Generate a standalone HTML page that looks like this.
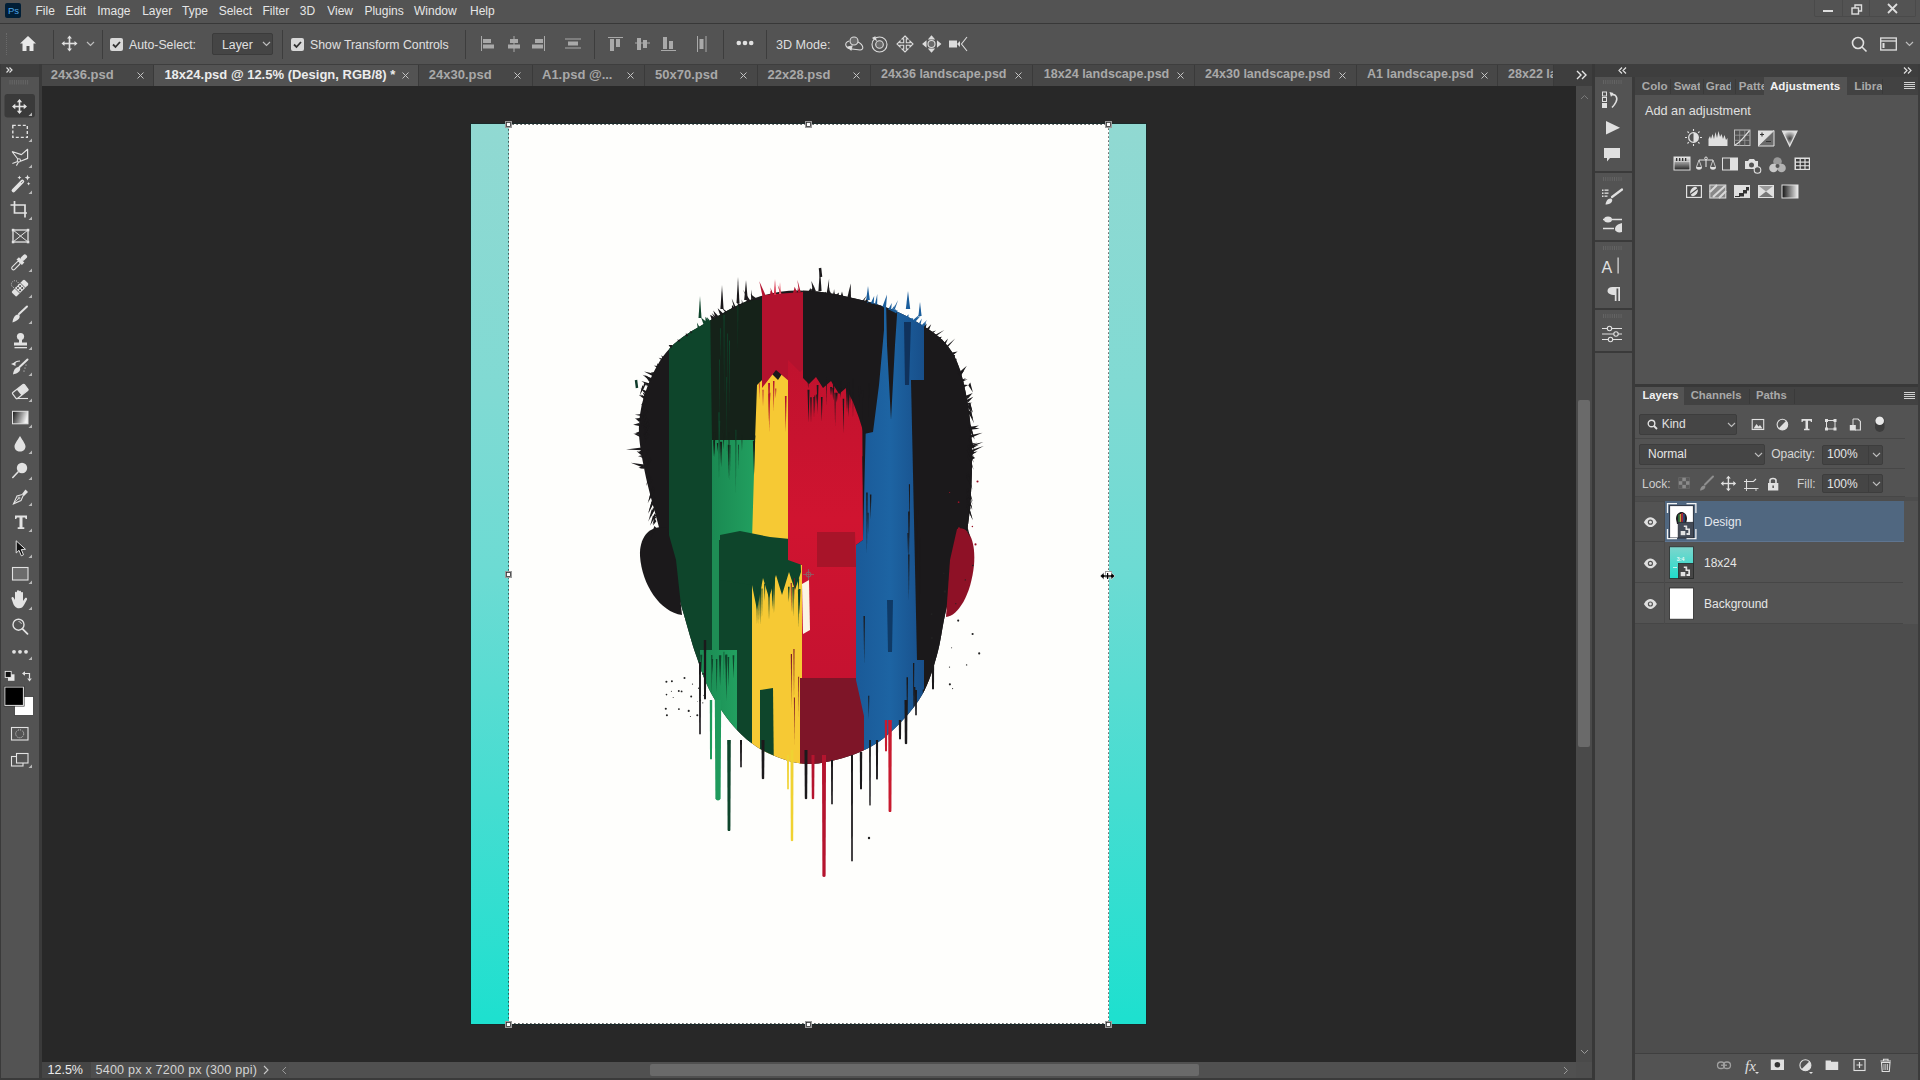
<!DOCTYPE html>
<html><head><meta charset="utf-8">
<style>
*{margin:0;padding:0;box-sizing:border-box}
html,body{width:1920px;height:1080px;overflow:hidden;background:#535353;font-family:"Liberation Sans",sans-serif;color:#dcdcdc}
.a{position:absolute}
.t{position:absolute;white-space:nowrap;line-height:1}
svg{position:absolute;overflow:visible}
</style></head><body>

<!-- MENU BAR -->
<div class="a" style="left:0;top:0;width:1920px;height:23px;background:#535353"></div>
<div class="a" style="left:0;top:22.5px;width:1920px;height:1.5px;background:#383838"></div>
<div class="a" style="left:5px;top:3px;width:16px;height:15px;background:#001e36;border-radius:2px"></div>
<div class="t" style="left:8px;top:5.5px;font-size:9.5px;color:#4aa6e8">Ps</div>
<div class="t" style="left:35.5px;top:5px;font-size:12px;color:#e6e6e6">File</div><div class="t" style="left:65.4px;top:5px;font-size:12px;color:#e6e6e6">Edit</div><div class="t" style="left:97.2px;top:5px;font-size:12px;color:#e6e6e6">Image</div><div class="t" style="left:142.2px;top:5px;font-size:12px;color:#e6e6e6">Layer</div><div class="t" style="left:182px;top:5px;font-size:12px;color:#e6e6e6">Type</div><div class="t" style="left:218.7px;top:5px;font-size:12px;color:#e6e6e6">Select</div><div class="t" style="left:262.5px;top:5px;font-size:12px;color:#e6e6e6">Filter</div><div class="t" style="left:299.8px;top:5px;font-size:12px;color:#e6e6e6">3D</div><div class="t" style="left:327.2px;top:5px;font-size:12px;color:#e6e6e6">View</div><div class="t" style="left:364.4px;top:5px;font-size:12px;color:#e6e6e6">Plugins</div><div class="t" style="left:414px;top:5px;font-size:12px;color:#e6e6e6">Window</div><div class="t" style="left:470px;top:5px;font-size:12px;color:#e6e6e6">Help</div>

<!-- OPTIONS BAR -->
<div class="a" style="left:0;top:24px;width:1920px;height:40px;background:#535353"></div>


<!-- options content -->
<div class="a" style="left:6px;top:33px;width:1px;height:22px;border-left:1px dotted #6a6a6a"></div>
<svg style="left:19px;top:35px" width="18" height="17" viewBox="0 0 18 17"><path d="M9 1 L17 8.5 L14.5 8.5 L14.5 16 L10.5 16 L10.5 11 L7.5 11 L7.5 16 L3.5 16 L3.5 8.5 L1 8.5 Z" fill="#e8e8e8"/></svg>
<div class="a" style="left:53px;top:30px;width:1px;height:29px;background:#3d3d3d"></div>
<svg style="left:61px;top:35px" width="17" height="17" viewBox="0 0 17 17"><g stroke="#e0e0e0" stroke-width="1.6" fill="#e0e0e0"><line x1="8.5" y1="2" x2="8.5" y2="15"/><line x1="2" y1="8.5" x2="15" y2="8.5"/></g><g fill="#e0e0e0"><path d="M8.5 0.5 L11 3.5 L6 3.5Z"/><path d="M8.5 16.5 L11 13.5 L6 13.5Z"/><path d="M0.5 8.5 L3.5 6 L3.5 11Z"/><path d="M16.5 8.5 L13.5 6 L13.5 11Z"/></g></svg>
<svg style="left:86px;top:41px" width="9" height="6" viewBox="0 0 9 6"><path d="M1 1 L4.5 4.5 L8 1" stroke="#bdbdbd" stroke-width="1.2" fill="none"/></svg>
<div class="a" style="left:102px;top:30px;width:1px;height:29px;background:#3d3d3d"></div>
<div class="a" style="left:110px;top:38px;width:13px;height:13px;background:#d8d8d8;border-radius:2px"></div>
<svg style="left:110px;top:38px" width="13" height="13" viewBox="0 0 13 13"><path d="M3 6.5 L5.5 9 L10 4" stroke="#333" stroke-width="1.8" fill="none"/></svg>
<div class="t" style="left:129px;top:39px;font-size:12.3px;color:#e0e0e0">Auto-Select:</div>
<div class="a" style="left:212px;top:33px;width:61px;height:22px;background:#454545;border:1px solid #3b3b3b;border-radius:2px"></div>
<div class="t" style="left:222px;top:39px;font-size:12.3px;color:#e0e0e0">Layer</div>
<svg style="left:262px;top:41px" width="9" height="6" viewBox="0 0 9 6"><path d="M1 1 L4.5 4.5 L8 1" stroke="#bdbdbd" stroke-width="1.2" fill="none"/></svg>
<div class="a" style="left:282px;top:30px;width:1px;height:29px;background:#3d3d3d"></div>
<div class="a" style="left:291px;top:38px;width:13px;height:13px;background:#d8d8d8;border-radius:2px"></div>
<svg style="left:291px;top:38px" width="13" height="13" viewBox="0 0 13 13"><path d="M3 6.5 L5.5 9 L10 4" stroke="#333" stroke-width="1.8" fill="none"/></svg>
<div class="t" style="left:310px;top:39px;font-size:12.3px;color:#e0e0e0">Show Transform Controls</div>
<div class="a" style="left:465px;top:30px;width:1px;height:29px;background:#3d3d3d"></div>
<svg style="left:480px;top:36px" width="110" height="16" viewBox="0 0 110 16" fill="#a9a9a9">
 <rect x="1" y="0" width="1" height="15"/><rect x="3" y="3" width="8" height="4"/><rect x="3" y="8.5" width="11" height="4"/>
 <rect x="33.5" y="0" width="1" height="16"/><rect x="30" y="3" width="8" height="4"/><rect x="28" y="8.5" width="12" height="4"/>
 <rect x="64" y="0" width="1" height="15"/><rect x="55" y="3" width="8" height="4"/><rect x="52" y="8.5" width="11" height="4"/>
 <rect x="85" y="2.5" width="16" height="1"/><rect x="88" y="5.5" width="10" height="4"/><rect x="85" y="11.5" width="16" height="1"/>
</svg>
<div class="a" style="left:594px;top:30px;width:1px;height:29px;background:#3d3d3d"></div>
<svg style="left:608px;top:36px" width="105" height="16" viewBox="0 0 105 16" fill="#a9a9a9">
 <rect x="0" y="1" width="15" height="1"/><rect x="2" y="3" width="4" height="12"/><rect x="8" y="3" width="4" height="8"/>
 <rect x="27" y="6.5" width="15" height="1"/><rect x="29" y="2" width="4" height="12"/><rect x="35" y="4" width="4" height="8"/>
 <rect x="53" y="14" width="15" height="1"/><rect x="55" y="1" width="4" height="12"/><rect x="61" y="5" width="4" height="8"/>
 <rect x="89" y="0" width="1" height="16"/><rect x="91.5" y="3" width="4" height="10"/><rect x="97.5" y="0" width="1" height="16"/>
</svg>
<div class="a" style="left:723px;top:30px;width:1px;height:29px;background:#3d3d3d"></div>
<svg style="left:736px;top:40px" width="18" height="6" viewBox="0 0 18 6" fill="#e0e0e0"><circle cx="2.8" cy="3" r="2.3"/><circle cx="9" cy="3" r="2.3"/><circle cx="15.2" cy="3" r="2.3"/></svg>
<div class="a" style="left:766px;top:30px;width:1px;height:29px;background:#3d3d3d"></div>
<div class="t" style="left:776px;top:39px;font-size:12.6px;color:#dedede">3D Mode:</div>
<svg style="left:844px;top:35px" width="125" height="18" viewBox="0 0 125 18" fill="none" stroke="#dcdcdc" stroke-width="1.1">
 <circle cx="10" cy="6" r="4" fill="#6a6a6a"/><path d="M5 6 C-1 8, 2 14, 8 14 L16 15 C20 15, 20 10, 14 7"/><path d="M4 12 L8 11 L7 15 Z" fill="#dcdcdc"/>
 <circle cx="35.5" cy="9.5" r="7.5"/><circle cx="35.5" cy="9.5" r="3.8" fill="#6a6a6a"/><path d="M29 3 L31 2 L32 5 Z" fill="#dcdcdc"/>
 <path d="M61 1 L64 4 L62.3 4 L62.3 7.7 L66 7.7 L66 6 L69 9 L66 12 L66 10.3 L62.3 10.3 L62.3 14 L64 14 L61 17 L58 14 L59.7 14 L59.7 10.3 L56 10.3 L56 12 L53 9 L56 6 L56 7.7 L59.7 7.7 L59.7 4 L58 4 Z"/>
 <circle cx="87.5" cy="9" r="3.5" fill="#6a6a6a"/><path d="M87.5 1 L90 4 L85 4 Z M87.5 17 L90 14 L85 14 Z M79 9 L82 6.5 L82 11.5 Z M96.5 9 L93.5 6.5 L93.5 11.5 Z" fill="#dcdcdc"/>
 <rect x="105" y="5.5" width="8" height="7" fill="#dcdcdc" stroke="none"/><path d="M113 9 L116 6 L116 12 Z" fill="#dcdcdc" stroke="none"/><path d="M123 2 L117.5 9 L123 16"/>
</svg>
<svg style="left:1851px;top:36px" width="17" height="17" viewBox="0 0 17 17" fill="none" stroke="#e0e0e0" stroke-width="1.6"><circle cx="7" cy="7" r="5.5"/><line x1="11" y1="11" x2="15.5" y2="15.5"/></svg>
<svg style="left:1880px;top:37px" width="17" height="14" viewBox="0 0 17 14" fill="none" stroke="#e0e0e0" stroke-width="1.3"><rect x="0.7" y="1" width="15.6" height="12"/><line x1="0.7" y1="4" x2="16.3" y2="4"/><rect x="2.5" y="6" width="2" height="5" fill="#e0e0e0" stroke="none"/></svg>
<svg style="left:1905px;top:41px" width="9" height="6" viewBox="0 0 9 6"><path d="M1 1 L4.5 4.5 L8 1" stroke="#bdbdbd" stroke-width="1.2" fill="none"/></svg>
<!-- window controls -->
<div class="a" style="left:1814px;top:-1px;width:102px;height:18px;border:1px solid #4a4a4a;border-top:none;border-radius:0 0 2px 2px"></div>
<div class="a" style="left:1842px;top:0;width:1px;height:16px;background:#4a4a4a"></div>
<div class="a" style="left:1869px;top:0;width:1px;height:16px;background:#4a4a4a"></div>
<div class="a" style="left:1823px;top:10px;width:10px;height:2px;background:#dedede"></div>
<svg style="left:1851px;top:4px" width="12" height="11" viewBox="0 0 12 11" fill="none" stroke="#dedede" stroke-width="1.4"><rect x="1" y="4" width="6.5" height="6"/><path d="M4 4 V1 H10.5 V7 H7.5"/></svg>
<svg style="left:1887px;top:3px" width="11" height="11" viewBox="0 0 11 11" stroke="#dedede" stroke-width="1.8"><line x1="1" y1="1" x2="10" y2="10"/><line x1="10" y1="1" x2="1" y2="10"/></svg>

<!-- TAB BAR -->
<div class="a" style="left:0;top:64px;width:1592px;height:22px;background:#3e3e3e"></div>

<div class="a" style="left:42px;top:65px;width:112px;height:21px;background:#474747;border-right:1px solid #3a3a3a"></div><div class="t" style="left:50.8px;top:67.8px;font-size:13px;font-weight:bold;color:#a9a9a9">24x36.psd</div><svg style="left:136.5px;top:71.5px" width="7" height="7" viewBox="0 0 7 7" stroke="#c4c4c4" stroke-width="1"><line x1="0.5" y1="0.5" x2="6.5" y2="6.5"/><line x1="6.5" y1="0.5" x2="0.5" y2="6.5"/></svg><div class="a" style="left:154px;top:65px;width:265px;height:21px;background:#535353;border-right:1px solid #3a3a3a"></div><div class="t" style="left:164.4px;top:67.8px;font-size:13px;font-weight:bold;color:#ececec">18x24.psd @ 12.5% (Design, RGB/8) *</div><svg style="left:401.5px;top:71.5px" width="7" height="7" viewBox="0 0 7 7" stroke="#c4c4c4" stroke-width="1"><line x1="0.5" y1="0.5" x2="6.5" y2="6.5"/><line x1="6.5" y1="0.5" x2="0.5" y2="6.5"/></svg><div class="a" style="left:419px;top:65px;width:113.5px;height:21px;background:#474747;border-right:1px solid #3a3a3a"></div><div class="t" style="left:428.75px;top:67.8px;font-size:13px;font-weight:bold;color:#a9a9a9">24x30.psd</div><svg style="left:514.0px;top:71.5px" width="7" height="7" viewBox="0 0 7 7" stroke="#c4c4c4" stroke-width="1"><line x1="0.5" y1="0.5" x2="6.5" y2="6.5"/><line x1="6.5" y1="0.5" x2="0.5" y2="6.5"/></svg><div class="a" style="left:532.5px;top:65px;width:112.5px;height:21px;background:#474747;border-right:1px solid #3a3a3a"></div><div class="t" style="left:542px;top:67.8px;font-size:13px;font-weight:bold;color:#a9a9a9">A1.psd @...</div><svg style="left:627.25px;top:71.5px" width="7" height="7" viewBox="0 0 7 7" stroke="#c4c4c4" stroke-width="1"><line x1="0.5" y1="0.5" x2="6.5" y2="6.5"/><line x1="6.5" y1="0.5" x2="0.5" y2="6.5"/></svg><div class="a" style="left:645px;top:65px;width:112.5px;height:21px;background:#474747;border-right:1px solid #3a3a3a"></div><div class="t" style="left:655px;top:67.8px;font-size:13px;font-weight:bold;color:#a9a9a9">50x70.psd</div><svg style="left:740.25px;top:71.5px" width="7" height="7" viewBox="0 0 7 7" stroke="#c4c4c4" stroke-width="1"><line x1="0.5" y1="0.5" x2="6.5" y2="6.5"/><line x1="6.5" y1="0.5" x2="0.5" y2="6.5"/></svg><div class="a" style="left:757.5px;top:65px;width:113.5px;height:21px;background:#474747;border-right:1px solid #3a3a3a"></div><div class="t" style="left:767.5px;top:67.8px;font-size:13px;font-weight:bold;color:#a9a9a9">22x28.psd</div><svg style="left:853.25px;top:71.5px" width="7" height="7" viewBox="0 0 7 7" stroke="#c4c4c4" stroke-width="1"><line x1="0.5" y1="0.5" x2="6.5" y2="6.5"/><line x1="6.5" y1="0.5" x2="0.5" y2="6.5"/></svg><div class="a" style="left:871px;top:65px;width:161.5px;height:21px;background:#474747;border-right:1px solid #3a3a3a"></div><div class="t" style="left:881px;top:67.8px;font-size:12.55px;font-weight:bold;color:#a9a9a9">24x36 landscape.psd</div><svg style="left:1015.25px;top:71.5px" width="7" height="7" viewBox="0 0 7 7" stroke="#c4c4c4" stroke-width="1"><line x1="0.5" y1="0.5" x2="6.5" y2="6.5"/><line x1="6.5" y1="0.5" x2="0.5" y2="6.5"/></svg><div class="a" style="left:1032.5px;top:65px;width:162.5px;height:21px;background:#474747;border-right:1px solid #3a3a3a"></div><div class="t" style="left:1043.75px;top:67.8px;font-size:12.55px;font-weight:bold;color:#a9a9a9">18x24 landscape.psd</div><svg style="left:1177.25px;top:71.5px" width="7" height="7" viewBox="0 0 7 7" stroke="#c4c4c4" stroke-width="1"><line x1="0.5" y1="0.5" x2="6.5" y2="6.5"/><line x1="6.5" y1="0.5" x2="0.5" y2="6.5"/></svg><div class="a" style="left:1195px;top:65px;width:162px;height:21px;background:#474747;border-right:1px solid #3a3a3a"></div><div class="t" style="left:1205px;top:67.8px;font-size:12.55px;font-weight:bold;color:#a9a9a9">24x30 landscape.psd</div><svg style="left:1339.3px;top:71.5px" width="7" height="7" viewBox="0 0 7 7" stroke="#c4c4c4" stroke-width="1"><line x1="0.5" y1="0.5" x2="6.5" y2="6.5"/><line x1="6.5" y1="0.5" x2="0.5" y2="6.5"/></svg><div class="a" style="left:1357px;top:65px;width:141.29999999999995px;height:21px;background:#474747;border-right:1px solid #3a3a3a"></div><div class="t" style="left:1367px;top:67.8px;font-size:12.55px;font-weight:bold;color:#a9a9a9">A1 landscape.psd</div><svg style="left:1480.5px;top:71.5px" width="7" height="7" viewBox="0 0 7 7" stroke="#c4c4c4" stroke-width="1"><line x1="0.5" y1="0.5" x2="6.5" y2="6.5"/><line x1="6.5" y1="0.5" x2="0.5" y2="6.5"/></svg><div class="a" style="left:1498.3px;top:65px;width:56px;height:21px;background:#474747;overflow:hidden;border-right:1px solid #3a3a3a"><div class="t" style="left:9.7px;top:2.8px;font-size:12.55px;font-weight:bold;color:#a9a9a9">28x22 landscape.psd</div></div><svg style="left:1576px;top:70px" width="11" height="10" viewBox="0 0 11 10" fill="none" stroke="#e6e6e6" stroke-width="1.4"><path d="M1 1 L5 5 L1 9 M6 1 L10 5 L6 9"/></svg>
<!-- LEFT TOOLBAR -->
<div class="a" style="left:0;top:64px;width:40px;height:1016px;background:#535353"></div>
<div class="a" style="left:0;top:64px;width:40px;height:13px;background:#3e3e3e"></div>
<div class="a" style="left:39px;top:64px;width:3px;height:1016px;background:#3a3a3a"></div>


<!-- TOOLBAR CONTENT -->
<div class="a" style="left:0;top:64px;width:1px;height:1016px;background:#3a3a3a"></div>
<svg style="left:6px;top:67px" width="7" height="6" viewBox="0 0 7 6" fill="none" stroke="#e0e0e0" stroke-width="1.2"><path d="M0.5 0.5 L3 3 L0.5 5.5 M3.5 0.5 L6 3 L3.5 5.5"/></svg>
<svg style="left:0;top:0" width="42" height="1080" viewBox="0 0 42 1080">
 <g stroke="#6e6e6e" stroke-width="0.7"><line x1="10.0" y1="80" x2="10.0" y2="84.5"/><line x1="12.2" y1="80" x2="12.2" y2="84.5"/><line x1="14.4" y1="80" x2="14.4" y2="84.5"/><line x1="16.6" y1="80" x2="16.6" y2="84.5"/><line x1="18.8" y1="80" x2="18.8" y2="84.5"/><line x1="21.0" y1="80" x2="21.0" y2="84.5"/><line x1="23.2" y1="80" x2="23.2" y2="84.5"/><line x1="25.4" y1="80" x2="25.4" y2="84.5"/><line x1="27.6" y1="80" x2="27.6" y2="84.5"/></g>
 <rect x="4.5" y="94" width="30.5" height="23.5" rx="3" fill="#3a3a3a"/>
 <!-- move -->
 <g fill="#e2e2e2" stroke="#e2e2e2"><line x1="19.5" y1="100.5" x2="19.5" y2="112.5" stroke-width="1.6"/><line x1="13.5" y1="106.5" x2="25.5" y2="106.5" stroke-width="1.6"/>
 <path d="M19.5 99 L22.2 102.3 L16.8 102.3Z M19.5 114 L22.2 110.7 L16.8 110.7Z M12 106.5 L15.3 103.8 L15.3 109.2Z M27 106.5 L23.7 103.8 L23.7 109.2Z" stroke="none"/></g>
 <path d="M32 116 L28.5 116 L32 112.5 Z" fill="#b8b8b8"/>
 <!-- marquee -->
 <rect x="12.8" y="125.4" width="14.5" height="12" fill="none" stroke="#e2e2e2" stroke-width="1.4" stroke-dasharray="3 2"/>
 <path d="M32 142 L28.5 142 L32 138.5 Z" fill="#b8b8b8"/>
 <!-- lasso -->
 <path d="M12 151.5 L21.4 154.6 L27.6 149.3 L27.6 158.4 L20.5 161.3 M12 151.5 L17.8 159" fill="none" stroke="#e2e2e2" stroke-width="1.2" stroke-linejoin="round"/><circle cx="18.9" cy="160.4" r="1.6" fill="none" stroke="#e2e2e2" stroke-width="1.1"/><path d="M17.6 161.5 L12.4 163.6 M18.5 162 L16.4 165.6" stroke="#e2e2e2" stroke-width="1.1"/>
 <path d="M32 168 L28.5 168 L32 164.5 Z" fill="#b8b8b8"/>
 <!-- magic wand -->
 <path d="M13.5 190.5 L22.3 181.5" stroke="#e2e2e2" stroke-width="3.8" stroke-linecap="round"/><path d="M21.2 182.8 L22.6 181.3" stroke="#6a6a6a" stroke-width="1"/>
 <path d="M19.4 175.6 L20 177 L21.4 177.6 L20 178.2 L19.4 179.6 L18.8 178.2 L17.4 177.6 L18.8 177Z M27.5 174.8 L28.3 176.8 L30.3 177.6 L28.3 178.4 L27.5 180.4 L26.7 178.4 L24.7 177.6 L26.7 176.8Z M28.6 182 L29.2 183.2 L30.4 183.7 L29.2 184.2 L28.6 185.4 L28 184.2 L26.8 183.7 L28 183.2Z" fill="#e2e2e2"/>
 <path d="M32 194 L28.5 194 L32 190.5 Z" fill="#b8b8b8"/>
 <!-- crop -->
 <path d="M14.5 201 V213 H27 M10.5 205 H25 V217.5" fill="none" stroke="#e2e2e2" stroke-width="1.7"/>
 <path d="M32 220 L28.5 220 L32 216.5 Z" fill="#b8b8b8"/>
 <!-- frame -->
 <rect x="13" y="230" width="15" height="12" fill="none" stroke="#e2e2e2" stroke-width="1.3"/><path d="M13 230 L28 242 M28 230 L13 242" stroke="#e2e2e2" stroke-width="1"/>
 <g fill="#e2e2e2"><rect x="11.8" y="228.8" width="2.5" height="2.5"/><rect x="26.8" y="228.8" width="2.5" height="2.5"/><rect x="11.8" y="240.8" width="2.5" height="2.5"/><rect x="26.8" y="240.8" width="2.5" height="2.5"/></g>
 <!-- eyedropper -->
 <g transform="rotate(45 20 261.5)">
  <rect x="18.3" y="262" width="3.4" height="10.5" rx="1.7" fill="none" stroke="#e2e2e2" stroke-width="1.1"/>
  <rect x="16.2" y="259.2" width="7.6" height="3.4" fill="#e2e2e2"/>
  <rect x="17.8" y="252.5" width="4.4" height="7.2" rx="2" fill="#e2e2e2"/>
 </g>
 <path d="M32 272 L28.5 272 L32 268.5 Z" fill="#b8b8b8"/>
 <!-- healing -->
 <g transform="rotate(-45 20 288)"><rect x="11" y="284.6" width="18" height="7" rx="1.5" fill="#e2e2e2"/><path d="M16.2 284.6 V291.6 M23.8 284.6 V291.6" stroke="#535353" stroke-width="0.8"/><g fill="#4a4a4a"><circle cx="18.5" cy="286.6" r="1"/><circle cx="21.5" cy="286.6" r="1"/><circle cx="18.5" cy="289.6" r="1"/><circle cx="21.5" cy="289.6" r="1"/></g></g>
 <circle cx="15" cy="284.3" r="3.6" fill="none" stroke="#e2e2e2" stroke-width="0.9" stroke-dasharray="0.9 1.3"/>
 <path d="M32 298 L28.5 298 L32 294.5 Z" fill="#b8b8b8"/>
 <!-- brush -->
 <path d="M19 314 L27 306.5" stroke="#e2e2e2" stroke-width="2" stroke-linecap="round"/><path d="M12.5 322.5 C13 318, 15 314, 18.5 314.5 C20.5 315.5, 20 318.5, 17.5 320 C16 321, 14 322, 12.5 322.5Z" fill="#e2e2e2"/>
 <path d="M32 324 L28.5 324 L32 320.5 Z" fill="#b8b8b8"/>
 <!-- stamp -->
 <circle cx="20.5" cy="336.5" r="3.6" fill="#e2e2e2"/><path d="M19 339 L19 342.5 L14 342.5 L14 345.5 L27 345.5 L27 342.5 L22 342.5 L22 339Z" fill="#e2e2e2"/><rect x="14.5" y="347" width="12.5" height="1.3" fill="#e2e2e2"/>
 <path d="M32 350 L28.5 350 L32 346.5 Z" fill="#b8b8b8"/>
 <!-- history brush -->
 <path d="M19.5 367 L27.5 359.5" stroke="#e2e2e2" stroke-width="2" stroke-linecap="round"/><path d="M13 374.5 C13.5 370.5, 15.5 366.5, 19 367 C21 368, 20.5 371, 18 372.5 C16.5 373.5, 14.5 374, 13 374.5Z" fill="#e2e2e2"/>
 <path d="M20 361 C17 361, 15 362, 14 364" fill="none" stroke="#e2e2e2" stroke-width="1.1"/><path d="M11 364 L15.5 362 L15.5 366Z" fill="#e2e2e2"/>
 <g fill="#e2e2e2"><circle cx="26" cy="365" r="0.6"/><circle cx="25" cy="368" r="0.6"/><circle cx="24" cy="371" r="0.6"/></g>
 <path d="M32 376 L28.5 376 L32 372.5 Z" fill="#b8b8b8"/>
 <!-- eraser -->
 <g transform="rotate(-38 20 392)"><rect x="13" y="388" width="15" height="7.5" rx="1" fill="none" stroke="#e2e2e2" stroke-width="1.2"/><rect x="19" y="388" width="9" height="7.5" fill="#e2e2e2"/></g><path d="M16 398.5 H28" stroke="#e2e2e2" stroke-width="1.1"/>
 <path d="M32 402 L28.5 402 L32 398.5 Z" fill="#b8b8b8"/>
 <!-- gradient -->
 <defs><linearGradient id="gt" x1="0" x2="1" y1="0" y2="0.3"><stop offset="0" stop-color="#111"/><stop offset="1" stop-color="#f0f0f0"/></linearGradient>
 <linearGradient id="hg" x1="0" x2="1"><stop offset="0" stop-color="#222"/><stop offset="1" stop-color="#eee"/></linearGradient></defs>
 <rect x="12.5" y="411.3" width="15.5" height="12.5" fill="url(#gt)" stroke="#e2e2e2" stroke-width="1"/>
 <path d="M32 428 L28.5 428 L32 424.5 Z" fill="#b8b8b8"/>
 <!-- blur drop -->
 <path d="M20 436 C17 441, 14.5 444, 14.5 446.5 C14.5 449.5, 17 451.5, 20 451.5 C23 451.5, 25.5 449.5, 25.5 446.5 C25.5 444, 23 441, 20 436Z" fill="#e2e2e2"/>
 <path d="M32 454 L28.5 454 L32 450.5 Z" fill="#b8b8b8"/>
 <!-- dodge -->
 <circle cx="22" cy="468" r="5.2" fill="#e2e2e2"/><path d="M18 472 L12.8 477.5" stroke="#e2e2e2" stroke-width="1.6" stroke-linecap="round"/>
 <path d="M32 480 L28.5 480 L32 476.5 Z" fill="#b8b8b8"/>
 <!-- pen -->
 <path d="M25.5 489.5 L28 492 L24 496 L22 494Z" fill="#e2e2e2"/><path d="M22.5 494.5 L17 496 L13.5 503.8 L21 500.5 L23.5 495" fill="none" stroke="#e2e2e2" stroke-width="1.1"/><path d="M13.5 503.8 L18.5 498.5" stroke="#e2e2e2" stroke-width="0.9"/><circle cx="19" cy="498" r="1" fill="none" stroke="#e2e2e2" stroke-width="0.8"/>
 <path d="M32 506 L28.5 506 L32 502.5 Z" fill="#b8b8b8"/>
 <!-- type -->
 <path d="M15 515.5 H27 V519 H25.8 L25 517.5 H22.5 V527.3 H24.3 V529 H17.7 V527.3 H19.5 V517.5 H17 L16.2 519 H15Z" fill="#e2e2e2"/>
 <path d="M32 532 L28.5 532 L32 528.5 Z" fill="#b8b8b8"/>
 <!-- path select -->
 <path d="M16.2 540.8 L16.2 553 L19 550.3 L21.3 555.8 L23.5 554.8 L21.3 549.5 L25.5 549.3Z" fill="#111" stroke="#e2e2e2" stroke-width="1"/>
 <path d="M32 558 L28.5 558 L32 554.5 Z" fill="#b8b8b8"/>
 <!-- rectangle -->
 <rect x="12.5" y="567.5" width="15.5" height="12.5" fill="#6c6c6c" stroke="#e2e2e2" stroke-width="1.1"/>
 <path d="M32 584 L28.5 584 L32 580.5 Z" fill="#b8b8b8"/>
 <!-- hand -->
 <path d="M15 597 L15 592.5 C15 591.5, 17 591.5, 17 592.5 L17 598 L17 591 C17 590, 19 590, 19 591 L19 597.5 L19 591.5 C19 590.5, 21 590.5, 21 591.5 L21 598 L21 592.8 C21 591.8, 23 591.8, 23 592.8 L23 601 L25 598.3 C25.8 597.3, 27.5 598, 27 599.5 L24 605 C23 607, 21.5 608.3, 19 608.3 C15.5 608.3, 14 605.5, 13 603 L11.5 598.5 C11.2 597, 13 596.5, 13.7 597.8 L15 600Z" fill="#e2e2e2"/>
 <path d="M32 610 L28.5 610 L32 606.5 Z" fill="#b8b8b8"/>
 <!-- zoom -->
 <circle cx="18.5" cy="624.7" r="5.5" fill="none" stroke="#e2e2e2" stroke-width="1.4"/><path d="M22.5 628.8 L27.5 633.8" stroke="#e2e2e2" stroke-width="1.8" stroke-linecap="round"/><path d="M18.5 621.5 A3.2 3.2 0 0 1 21.5 624" fill="none" stroke="#e2e2e2" stroke-width="0.8"/>
 <!-- more -->
 <g fill="#e2e2e2"><circle cx="14" cy="651.8" r="1.9"/><circle cx="20" cy="651.8" r="1.9"/><circle cx="26" cy="651.8" r="1.9"/></g>
 <path d="M32 660 L28.5 660 L32 656.5 Z" fill="#b8b8b8"/>
 <!-- default colors -->
 <rect x="8" y="674.3" width="6.5" height="6.5" fill="#e8e8e8"/><rect x="5.2" y="671.4" width="6" height="6" fill="#111" stroke="#e8e8e8" stroke-width="0.9"/>
 <!-- swap -->
 <path d="M24 673.5 H29.5 V678.5" fill="none" stroke="#e2e2e2" stroke-width="1.2"/><path d="M22 673.5 L25 671.2 L25 675.8Z M29.5 681.5 L27.2 678.5 L31.8 678.5Z" fill="#e2e2e2"/>
 <!-- bg color -->
 <rect x="14.5" y="696.5" width="19" height="19" fill="#ffffff" stroke="#3a3a3a" stroke-width="0.8"/>
 <rect x="4.8" y="687" width="18.6" height="18.4" fill="#000" stroke="#f0f0f0" stroke-width="1"/>
 <rect x="4" y="686.2" width="20.2" height="20" fill="none" stroke="#333" stroke-width="0.6"/>
 <!-- quick mask -->
 <rect x="11.5" y="727.5" width="16.5" height="12.5" fill="none" stroke="#e2e2e2" stroke-width="1.1"/><circle cx="19.7" cy="733.8" r="4" fill="none" stroke="#e2e2e2" stroke-width="1" stroke-dasharray="0.9 1.2"/>
 <!-- screen mode -->
 <rect x="11.5" y="756.5" width="11.5" height="9.5" fill="#535353" stroke="#e2e2e2" stroke-width="1.1"/><rect x="16.5" y="753.5" width="11.5" height="9.5" fill="#535353" stroke="#e2e2e2" stroke-width="1.1"/>
 <path d="M32 768 L28.5 768 L32 764.5 Z" fill="#b8b8b8"/>
</svg>

<!-- CANVAS AREA -->
<div class="a" style="left:42px;top:86px;width:1534px;height:976px;background:#282828"></div>


<!-- DOCUMENT -->
<div class="a" style="left:470px;top:123px;width:677px;height:902px;background:#0f2a2a;opacity:.6"></div>
<div class="a" style="left:471px;top:124px;width:675px;height:900px;background:linear-gradient(180deg,#91d9d2 0%,#80dad3 30%,#6cdbd3 50%,#45ddd1 75%,#1de0cf 100%)"></div>
<div class="a" style="left:509px;top:124px;width:600px;height:900px;background:#fefefc"></div>
<svg id="head" style="left:0;top:0" width="1920" height="1080" viewBox="0 0 1920 1080">
<defs><clipPath id="hc"><path d="M812.0 291.0 C831.7 292.5 860.7 299.3 879.0 305.0 C897.3 310.7 909.8 317.2 922.0 325.0 C934.2 332.8 944.5 339.7 952.0 352.0 C959.5 364.3 963.7 381.3 967.0 399.0 C970.3 416.7 971.8 437.0 972.0 458.0 C972.2 479.0 970.7 506.7 968.0 525.0 C965.3 543.3 959.8 553.0 956.0 568.0 C952.2 583.0 948.2 600.5 945.0 615.0 C941.8 629.5 940.8 641.7 937.0 655.0 C933.2 668.3 929.3 682.5 922.0 695.0 C914.7 707.5 903.3 720.5 893.0 730.0 C882.7 739.5 873.8 746.3 860.0 752.0 C846.2 757.7 825.3 763.8 810.0 764.0 C794.7 764.2 780.2 758.7 768.0 753.0 C755.8 747.3 746.5 740.0 737.0 730.0 C727.5 720.0 717.8 705.5 711.0 693.0 C704.2 680.5 700.5 668.0 696.0 655.0 C691.5 642.0 688.3 630.0 684.0 615.0 C679.7 600.0 674.5 580.8 670.0 565.0 C665.5 549.2 661.3 536.2 657.0 520.0 C652.7 503.8 647.0 483.8 644.0 468.0 C641.0 452.2 638.3 438.8 639.0 425.0 C639.7 411.2 642.8 397.8 648.0 385.0 C653.2 372.2 659.8 358.7 670.0 348.0 C680.2 337.3 693.8 329.7 709.0 321.0 C724.2 312.3 743.8 301.0 761.0 296.0 C778.2 291.0 792.3 289.5 812.0 291.0 Z"/></clipPath><linearGradient id="redg" x1="0" y1="0" x2="0" y2="1"><stop offset="0" stop-color="#c0122e"/><stop offset="0.5" stop-color="#d01430"/><stop offset="1" stop-color="#c51230"/></linearGradient><linearGradient id="blug" x1="0" y1="0" x2="1" y2="0"><stop offset="0" stop-color="#1a5a98"/><stop offset="0.5" stop-color="#1d64a3"/><stop offset="1" stop-color="#184f8a"/></linearGradient><linearGradient id="lgg" x1="0" y1="0" x2="1" y2="0"><stop offset="0" stop-color="#1a8a52"/><stop offset="1" stop-color="#22a060"/></linearGradient></defs>
<g clip-path="url(#hc)">
<rect x="600" y="280" width="400" height="500" fill="#1b191b"/>
<path d="M669.0 300.0 L712.0 300.0 L712.0 650.0 L704.0 660.0 L700.0 780.0 L669.0 780.0 Z" fill="#0e452b" />
<path d="M710.0 300.0 L762.0 300.0 L762.0 385.0 L756.0 440.0 L712.0 440.0 Z" fill="#152219" />
<path d="M712.0 440.0 L756.0 440.0 L754.0 540.0 L712.0 540.0 Z" fill="url(#lgg)" />
<path d="M712.0 540.0 L752.0 540.0 L752.0 780.0 L737.0 780.0 L737.0 650.0 L719.0 650.0 L719.0 560.0 L712.0 560.0 Z" fill="#0e452b" />
<path d="M712.0 540.0 L719.0 540.0 L719.0 650.0 L712.0 650.0 Z" fill="#1e8d54" />
<path d="M700.0 650.0 L737.0 650.0 L737.0 780.0 L700.0 780.0 Z" fill="url(#lgg)" />
<path d="M757.0 385.0 L770.0 372.0 L778.0 380.0 L786.0 368.0 L790.0 380.0 L788.0 560.0 L802.0 565.0 L802.0 780.0 L752.0 780.0 L752.0 540.0 L755.0 440.0 Z" fill="#f6c934" />
<path d="M720.0 535.0 L740.0 531.0 L770.0 537.0 L800.0 540.0 L801.0 572.0 L795.0 590.0 L789.0 572.0 L782.0 595.0 L776.0 575.0 L769.0 598.0 L763.0 578.0 L757.0 610.0 L752.0 585.0 L720.0 580.0 Z" fill="#0e452b" />
<path d="M760.0 690.0 L773.0 688.0 L774.0 780.0 L760.0 780.0 Z" fill="#0e452b" />
<path d="M762.0 295.0 L803.0 292.0 L803.0 372.0 L790.0 382.0 L776.0 370.0 L762.0 388.0 Z" fill="#b3122e" />
<path d="M788.0 360.0 L800.0 372.0 L812.0 362.0 L824.0 378.0 L838.0 366.0 L850.0 380.0 L862.0 372.0 L863.0 540.0 L856.0 545.0 L856.0 680.0 L802.0 680.0 L802.0 565.0 L788.0 560.0 Z" fill="url(#redg)" />
<path d="M802.0 584.0 L809.0 580.0 L810.0 630.0 L803.0 634.0 Z" fill="#fbf4e4" />
<path d="M817.0 532.0 L855.0 532.0 L856.0 567.0 L817.0 567.0 Z" fill="#a81429" />
<path d="M800.0 678.0 L864.0 678.0 L864.0 790.0 L800.0 790.0 Z" fill="#7e1528" />
<path d="M862.0 300.0 L924.0 305.0 L924.0 790.0 L864.0 790.0 L864.0 716.0 L856.0 680.0 L856.0 545.0 L863.0 540.0 L866.0 420.0 Z" fill="url(#blug)" />
<path d="M803.0 290.0 L884.0 290.0 L884.0 330.0 L879.0 385.0 L873.0 432.0 L864.0 434.0 L859.0 418.0 L853.0 402.0 L846.0 388.0 L839.0 394.0 L831.0 381.0 L823.0 388.0 L816.0 377.0 L809.0 384.0 L803.0 378.0 Z" fill="#1b191b" />
<path d="M886.0 300.0 L898.0 300.0 L895.0 345.0 L891.0 420.0 L887.0 345.0 Z" fill="#1b191b" />
<path d="M904.0 322.0 L911.0 322.0 L909.0 385.0 L905.0 385.0 Z" fill="#10325c" />
<path d="M887.0 600.0 L893.0 600.0 L892.0 652.0 L888.0 652.0 Z" fill="#0f3a66" />
<path d="M924.0 290.0 L990.0 290.0 L990.0 790.0 L924.0 790.0 Z" fill="#1b191b" />
<path d="M911.0 380.0 L924.0 380.0 L924.0 660.0 L917.0 660.0 Z" fill="#1b191b" />
<path d="M826.0 377.7 L827.0 377.7 L826.5 406.6 Z" fill="#1b191b" /><path d="M839.8 388.2 L841.2 388.2 L840.5 398.0 Z" fill="#1b191b" /><path d="M807.4 378.2 L808.9 378.2 L808.2 388.4 Z" fill="#1b191b" /><path d="M832.6 381.4 L834.8 381.4 L833.7 393.3 Z" fill="#1b191b" /><path d="M845.8 385.5 L848.2 385.5 L847.0 412.0 Z" fill="#1b191b" /><path d="M868.5 383.0 L869.2 383.0 L868.8 418.4 Z" fill="#1b191b" /><path d="M814.4 395.6 L815.3 395.6 L814.8 413.5 Z" fill="#1b191b" /><path d="M816.7 384.9 L818.5 384.9 L817.6 413.4 Z" fill="#1b191b" /><path d="M840.6 380.9 L841.4 380.9 L841.0 390.9 Z" fill="#1b191b" /><path d="M849.2 390.1 L850.7 390.1 L850.0 408.1 Z" fill="#1b191b" /><path d="M834.5 392.8 L835.7 392.8 L835.1 426.2 Z" fill="#1b191b" /><path d="M820.9 397.0 L822.6 397.0 L821.7 421.8 Z" fill="#1b191b" /><path d="M852.4 378.8 L853.6 378.8 L853.0 418.2 Z" fill="#1b191b" /><path d="M832.2 387.7 L834.2 387.7 L833.2 400.6 Z" fill="#1b191b" /><path d="M807.5 389.8 L809.5 389.8 L808.5 422.2 Z" fill="#1b191b" /><path d="M861.9 390.3 L863.2 390.3 L862.5 420.5 Z" fill="#1b191b" /><path d="M842.7 398.7 L844.2 398.7 L843.5 433.6 Z" fill="#1b191b" /><path d="M835.8 392.8 L837.7 392.8 L836.8 402.8 Z" fill="#1b191b" /><path d="M847.1 382.8 L849.6 382.8 L848.3 417.1 Z" fill="#1b191b" /><path d="M830.1 387.1 L832.0 387.1 L831.0 395.8 Z" fill="#1b191b" /><path d="M815.9 394.4 L816.8 394.4 L816.4 404.3 Z" fill="#1b191b" /><path d="M813.4 396.9 L814.6 396.9 L814.0 417.4 Z" fill="#1b191b" /><path d="M810.2 397.2 L811.7 397.2 L811.0 422.8 Z" fill="#1b191b" /><path d="M858.3 386.0 L860.5 386.0 L859.4 402.9 Z" fill="#1b191b" />
<path d="M768.1 383.0 L770.0 383.0 L769.0 421.8 Z" fill="#b3122e" /><path d="M762.5 389.7 L763.5 389.7 L763.0 406.7 Z" fill="#b3122e" /><path d="M775.3 388.4 L776.3 388.4 L775.8 398.5 Z" fill="#b3122e" /><path d="M768.4 393.8 L769.9 393.8 L769.2 432.4 Z" fill="#b3122e" /><path d="M773.0 381.1 L774.5 381.1 L773.7 411.4 Z" fill="#b3122e" /><path d="M784.9 396.0 L786.6 396.0 L785.7 432.2 Z" fill="#b3122e" /><path d="M769.2 392.7 L770.4 392.7 L769.8 405.8 Z" fill="#b3122e" /><path d="M758.9 383.2 L759.7 383.2 L759.3 399.5 Z" fill="#b3122e" />
<path d="M728.3 432.3 L729.1 432.3 L728.7 440.3 Z" fill="#152219" /><path d="M716.9 443.1 L718.2 443.1 L717.5 451.9 Z" fill="#152219" /><path d="M741.5 435.2 L742.4 435.2 L742.0 451.3 Z" fill="#152219" /><path d="M729.5 444.9 L730.4 444.9 L729.9 480.1 Z" fill="#152219" /><path d="M734.4 431.5 L735.9 431.5 L735.2 442.3 Z" fill="#152219" /><path d="M728.4 432.4 L729.6 432.4 L729.0 466.9 Z" fill="#152219" /><path d="M713.1 432.2 L715.5 432.2 L714.3 457.1 Z" fill="#152219" /><path d="M738.1 444.7 L738.8 444.7 L738.4 469.6 Z" fill="#152219" /><path d="M753.4 435.5 L755.4 435.5 L754.4 451.9 Z" fill="#152219" /><path d="M720.0 441.7 L722.1 441.7 L721.1 466.7 Z" fill="#152219" /><path d="M727.8 444.8 L728.9 444.8 L728.4 478.7 Z" fill="#152219" /><path d="M752.9 441.1 L755.1 441.1 L754.0 475.3 Z" fill="#152219" /><path d="M722.9 430.4 L724.5 430.4 L723.7 449.8 Z" fill="#152219" /><path d="M713.3 440.4 L714.5 440.4 L713.9 456.7 Z" fill="#152219" />
<path d="M797.9 589.8 L799.4 589.8 L798.7 627.9 Z" fill="#0e452b" /><path d="M797.8 578.4 L799.2 578.4 L798.5 595.0 Z" fill="#0e452b" /><path d="M761.4 588.5 L762.5 588.5 L762.0 617.2 Z" fill="#0e452b" /><path d="M792.3 587.0 L793.9 587.0 L793.1 616.6 Z" fill="#0e452b" /><path d="M756.1 586.7 L758.0 586.7 L757.0 624.0 Z" fill="#0e452b" /><path d="M788.0 586.8 L789.6 586.8 L788.8 602.2 Z" fill="#0e452b" /><path d="M768.0 580.9 L770.1 580.9 L769.0 620.1 Z" fill="#0e452b" /><path d="M771.3 577.6 L773.7 577.6 L772.5 609.3 Z" fill="#0e452b" /><path d="M758.1 587.1 L759.1 587.1 L758.6 624.2 Z" fill="#0e452b" /><path d="M759.0 584.9 L761.2 584.9 L760.1 624.3 Z" fill="#0e452b" /><path d="M768.8 575.2 L770.5 575.2 L769.7 589.1 Z" fill="#0e452b" /><path d="M798.6 589.0 L800.5 589.0 L799.5 614.8 Z" fill="#0e452b" /><path d="M772.8 578.2 L775.1 578.2 L774.0 613.0 Z" fill="#0e452b" /><path d="M764.1 583.8 L765.3 583.8 L764.7 601.0 Z" fill="#0e452b" />
<path d="M711.7 659.1 L713.1 659.1 L712.4 674.3 Z" fill="#0e452b" /><path d="M715.9 659.0 L717.4 659.0 L716.7 692.4 Z" fill="#0e452b" /><path d="M718.9 655.3 L721.3 655.3 L720.1 685.4 Z" fill="#0e452b" /><path d="M723.6 651.8 L724.3 651.8 L723.9 679.4 Z" fill="#0e452b" /><path d="M700.2 654.7 L702.3 654.7 L701.2 671.6 Z" fill="#0e452b" /><path d="M732.6 655.2 L734.3 655.2 L733.5 678.2 Z" fill="#0e452b" /><path d="M725.0 655.6 L727.1 655.6 L726.1 669.8 Z" fill="#0e452b" /><path d="M711.2 655.1 L712.4 655.1 L711.8 696.0 Z" fill="#0e452b" /><path d="M725.3 654.4 L727.3 654.4 L726.3 700.9 Z" fill="#0e452b" /><path d="M727.6 656.9 L729.2 656.9 L728.4 687.4 Z" fill="#0e452b" />
<path d="M914.0 687.1 L915.4 687.1 L914.7 731.0 Z" fill="#1b191b" /><path d="M919.0 537.1 L920.8 537.1 L919.9 604.2 Z" fill="#1b191b" /><path d="M916.2 510.2 L918.1 510.2 L917.2 572.2 Z" fill="#1b191b" /><path d="M907.4 532.9 L908.7 532.9 L908.1 556.6 Z" fill="#1b191b" /><path d="M906.5 677.3 L908.0 677.3 L907.2 736.5 Z" fill="#1b191b" /><path d="M908.1 511.5 L909.7 511.5 L908.9 564.5 Z" fill="#1b191b" /><path d="M922.7 689.6 L924.6 689.6 L923.6 720.5 Z" fill="#1b191b" /><path d="M913.0 663.1 L914.3 663.1 L913.6 732.6 Z" fill="#1b191b" /><path d="M908.2 554.6 L909.5 554.6 L908.9 600.4 Z" fill="#1b191b" /><path d="M908.9 484.3 L910.0 484.3 L909.5 540.4 Z" fill="#1b191b" />
<path d="M867.5 512.8 L868.6 512.8 L868.1 533.7 Z" fill="#1b191b" /><path d="M868.2 695.8 L869.3 695.8 L868.8 719.0 Z" fill="#1b191b" /><path d="M869.9 494.4 L871.4 494.4 L870.6 519.6 Z" fill="#1b191b" /><path d="M862.4 456.3 L863.7 456.3 L863.1 489.8 Z" fill="#1b191b" /><path d="M866.2 492.4 L867.7 492.4 L866.9 553.4 Z" fill="#1b191b" /><path d="M863.5 616.1 L864.9 616.1 L864.2 664.6 Z" fill="#1b191b" />
<path d="M719.0 359.5 L719.8 359.5 L719.4 430.8 Z" fill="#0e452b" /><path d="M718.3 412.2 L719.7 412.2 L719.0 480.3 Z" fill="#0e452b" /><path d="M718.8 420.8 L720.2 420.8 L719.5 454.8 Z" fill="#0e452b" /><path d="M735.4 429.7 L736.4 429.7 L735.9 492.9 Z" fill="#0e452b" /><path d="M727.1 333.4 L727.9 333.4 L727.5 395.0 Z" fill="#0e452b" /><path d="M719.9 328.2 L720.8 328.2 L720.3 361.3 Z" fill="#0e452b" /><path d="M729.0 340.6 L730.0 340.6 L729.5 416.2 Z" fill="#0e452b" /><path d="M737.5 302.5 L738.3 302.5 L737.9 353.4 Z" fill="#0e452b" /><path d="M726.3 377.1 L727.0 377.1 L726.6 451.1 Z" fill="#0e452b" /><path d="M723.5 314.9 L724.6 314.9 L724.1 401.0 Z" fill="#0e452b" />
<path d="M798.2 676.8 L799.1 676.8 L798.6 716.6 Z" fill="#7e1528" /><path d="M793.9 697.5 L794.9 697.5 L794.4 745.1 Z" fill="#7e1528" /><path d="M793.4 649.0 L794.5 649.0 L794.0 697.3 Z" fill="#7e1528" /><path d="M794.0 578.2 L794.9 578.2 L794.5 600.4 Z" fill="#7e1528" /><path d="M790.7 582.9 L791.8 582.9 L791.2 613.1 Z" fill="#7e1528" /><path d="M790.8 653.9 L792.0 653.9 L791.4 708.7 Z" fill="#7e1528" />
</g>
<path d="M667 528 C652 524 639 535 640 556 C642 585 660 612 682 615 L676 560 Z" fill="#1b191b"/>
<path d="M957 529 C968 525 976 540 974 565 C971 595 958 616 946 617 L950 560 Z" fill="#8e1126"/>
<path d="M642.7 456.8 L642.5 455.0 L637.9 456.3 Z" fill="#1b191b" /><path d="M641.8 450.2 L641.7 447.4 L626.0 449.4 Z" fill="#1b191b" /><path d="M642.5 458.1 L643.1 456.8 L639.0 455.9 Z" fill="#1b191b" /><path d="M642.0 452.9 L642.2 450.2 L638.9 451.3 Z" fill="#1b191b" /><path d="M644.1 468.5 L643.9 467.0 L639.6 468.5 Z" fill="#1b191b" /><path d="M644.1 468.4 L643.7 465.7 L638.4 467.7 Z" fill="#1b191b" /><path d="M639.9 436.9 L640.6 434.6 L633.3 433.5 Z" fill="#1b191b" /><path d="M641.7 455.4 L643.0 452.6 L636.6 451.3 Z" fill="#1b191b" /><path d="M643.4 467.7 L644.2 464.5 L630.8 462.7 Z" fill="#1b191b" /><path d="M640.0 434.9 L639.9 431.3 L634.9 433.3 Z" fill="#1b191b" /><path d="M645.3 394.1 L647.2 391.6 L640.5 388.2 Z" fill="#1b191b" /><path d="M645.0 398.4 L645.5 396.1 L642.5 396.6 Z" fill="#1b191b" /><path d="M639.2 422.1 L640.7 419.5 L634.9 417.9 Z" fill="#1b191b" /><path d="M644.5 399.3 L645.8 396.2 L638.9 395.1 Z" fill="#1b191b" /><path d="M642.9 406.4 L644.2 403.4 L641.3 403.9 Z" fill="#1b191b" /><path d="M641.2 415.9 L641.3 413.9 L634.9 414.8 Z" fill="#1b191b" /><path d="M644.7 396.4 L646.6 394.5 L642.6 392.4 Z" fill="#1b191b" /><path d="M644.7 398.3 L645.6 397.0 L640.3 394.3 Z" fill="#1b191b" /><path d="M640.2 420.5 L640.5 417.7 L636.5 418.6 Z" fill="#1b191b" /><path d="M639.2 426.1 L639.0 422.9 L633.1 424.8 Z" fill="#1b191b" /><path d="M662.2 361.1 L663.5 358.9 L658.7 357.7 Z" fill="#1b191b" /><path d="M649.2 382.0 L652.0 379.3 L645.1 375.0 Z" fill="#1b191b" /><path d="M647.8 385.5 L649.0 383.2 L641.4 380.9 Z" fill="#1b191b" /><path d="M653.4 376.4 L654.4 373.7 L644.1 371.5 Z" fill="#1b191b" /><path d="M650.2 381.3 L652.0 378.2 L642.6 374.7 Z" fill="#1b191b" /><path d="M657.8 367.4 L660.6 365.0 L657.0 363.6 Z" fill="#1b191b" /><path d="M658.4 368.3 L659.0 365.8 L653.9 365.7 Z" fill="#1b191b" /><path d="M654.1 375.5 L655.2 372.1 L650.9 372.6 Z" fill="#1b191b" /><path d="M646.9 386.4 L649.2 383.4 L645.9 383.3 Z" fill="#1b191b" /><path d="M662.7 359.3 L664.7 357.9 L661.2 355.2 Z" fill="#1b191b" /><path d="M708.0 321.6 L709.9 320.5 L706.7 317.1 Z" fill="#0e452b" /><path d="M671.0 348.4 L672.7 345.0 L668.6 345.1 Z" fill="#1b191b" /><path d="M679.0 342.2 L680.4 340.3 L677.2 339.4 Z" fill="#1b191b" /><path d="M705.5 322.8 L709.1 321.6 L705.4 316.7 Z" fill="#0e452b" /><path d="M705.3 323.5 L708.1 321.7 L705.5 320.7 Z" fill="#0e452b" /><path d="M686.9 336.2 L688.2 335.4 L685.6 332.7 Z" fill="#1b191b" /><path d="M705.4 323.8 L706.8 322.1 L703.0 320.3 Z" fill="#0e452b" /><path d="M697.8 328.4 L699.9 327.7 L696.9 322.4 Z" fill="#0e452b" /><path d="M691.0 333.6 L692.4 332.3 L689.7 330.8 Z" fill="#1b191b" /><path d="M703.7 324.7 L707.0 322.4 L701.1 317.5 Z" fill="#0e452b" /><path d="M686.9 336.8 L688.2 334.9 L685.4 334.4 Z" fill="#1b191b" /><path d="M712.4 320.0 L715.1 317.5 L710.1 314.7 Z" fill="#1b191b" /><path d="M746.9 302.7 L749.1 301.8 L746.0 297.5 Z" fill="#1b191b" /><path d="M726.0 313.2 L727.2 311.9 L721.1 307.0 Z" fill="#1b191b" /><path d="M734.2 308.8 L736.2 308.1 L731.7 298.5 Z" fill="#1b191b" /><path d="M720.4 315.8 L723.4 313.8 L717.7 308.3 Z" fill="#1b191b" /><path d="M752.9 300.3 L755.9 298.1 L750.7 294.2 Z" fill="#1b191b" /><path d="M731.8 309.9 L735.4 308.5 L732.0 305.1 Z" fill="#1b191b" /><path d="M751.1 300.4 L752.8 300.3 L751.2 289.6 Z" fill="#1b191b" /><path d="M715.6 318.0 L718.4 316.3 L713.2 310.5 Z" fill="#1b191b" /><path d="M741.9 305.0 L743.4 304.7 L741.7 299.6 Z" fill="#1b191b" /><path d="M748.7 302.0 L750.6 300.9 L743.0 289.7 Z" fill="#1b191b" /><path d="M715.0 318.4 L716.3 317.2 L711.6 313.1 Z" fill="#1b191b" /><path d="M711.8 319.8 L713.5 318.7 L710.4 315.5 Z" fill="#1b191b" /><path d="M738.8 307.3 L741.7 304.7 L737.1 302.4 Z" fill="#1b191b" /><path d="M792.9 292.6 L794.9 293.0 L794.5 289.4 Z" fill="#b3122e" /><path d="M808.7 291.0 L811.3 291.4 L810.3 289.1 Z" fill="#1b191b" /><path d="M793.5 292.9 L797.3 292.4 L794.6 286.7 Z" fill="#b3122e" /><path d="M771.2 295.7 L773.9 294.1 L770.3 291.0 Z" fill="#b3122e" /><path d="M770.1 295.0 L772.1 295.0 L771.1 290.0 Z" fill="#b3122e" /><path d="M809.5 291.3 L811.4 291.0 L810.1 287.8 Z" fill="#1b191b" /><path d="M798.9 292.4 L800.7 292.0 L797.4 280.0 Z" fill="#b3122e" /><path d="M771.5 295.1 L773.3 294.7 L770.4 287.4 Z" fill="#b3122e" /><path d="M780.3 294.3 L781.8 293.8 L777.6 284.7 Z" fill="#b3122e" /><path d="M762.5 296.2 L765.6 295.2 L759.3 281.3 Z" fill="#b3122e" /><path d="M810.1 290.4 L813.7 291.6 L812.9 288.1 Z" fill="#1b191b" /><path d="M798.0 292.7 L800.2 291.8 L797.5 288.3 Z" fill="#b3122e" /><path d="M833.1 295.7 L835.4 295.5 L833.9 292.0 Z" fill="#1b191b" /><path d="M874.9 304.2 L877.2 304.5 L877.3 294.0 Z" fill="#1b5e9c" /><path d="M865.9 301.8 L868.2 303.2 L868.3 300.6 Z" fill="#1b5e9c" /><path d="M835.3 295.4 L838.6 297.0 L838.8 292.5 Z" fill="#1b191b" /><path d="M813.3 291.4 L814.8 291.4 L813.8 284.8 Z" fill="#1b191b" /><path d="M812.7 291.9 L815.9 291.0 L811.4 281.1 Z" fill="#1b191b" /><path d="M870.7 303.2 L873.7 304.0 L874.2 296.1 Z" fill="#1b5e9c" /><path d="M828.9 294.5 L830.2 294.9 L830.6 291.2 Z" fill="#1b191b" /><path d="M862.0 301.2 L863.2 302.0 L867.0 295.3 Z" fill="#1b191b" /><path d="M826.5 294.2 L828.9 294.4 L829.1 278.7 Z" fill="#1b191b" /><path d="M827.9 294.4 L829.8 294.6 L829.3 287.0 Z" fill="#1b191b" /><path d="M864.5 301.5 L867.1 302.9 L868.9 296.4 Z" fill="#1b191b" /><path d="M833.2 295.6 L834.8 295.6 L834.1 288.9 Z" fill="#1b191b" /><path d="M824.5 293.6 L825.9 294.0 L825.9 291.5 Z" fill="#1b191b" /><path d="M847.1 298.5 L851.0 299.0 L850.7 283.6 Z" fill="#1b191b" /><path d="M828.1 295.0 L831.3 294.4 L828.9 289.8 Z" fill="#1b191b" /><path d="M840.4 297.2 L843.5 297.3 L842.0 291.5 Z" fill="#1b191b" /><path d="M910.0 318.6 L912.4 321.3 L913.2 318.2 Z" fill="#1b5e9c" /><path d="M890.8 310.4 L892.5 311.4 L894.9 305.3 Z" fill="#1b5e9c" /><path d="M888.2 309.5 L891.0 310.4 L891.8 303.0 Z" fill="#1b5e9c" /><path d="M892.1 311.1 L893.9 311.9 L898.1 300.1 Z" fill="#1b5e9c" /><path d="M912.8 320.3 L914.7 322.0 L920.2 313.9 Z" fill="#1b5e9c" /><path d="M913.5 320.6 L914.9 322.2 L921.2 315.3 Z" fill="#1b5e9c" /><path d="M882.3 307.0 L886.0 307.8 L887.0 294.6 Z" fill="#1b5e9c" /><path d="M893.8 311.3 L896.2 313.6 L897.5 309.9 Z" fill="#1b5e9c" /><path d="M918.8 323.6 L920.6 324.3 L921.8 318.6 Z" fill="#1b5e9c" /><path d="M893.4 312.0 L896.3 312.7 L895.7 309.0 Z" fill="#1b5e9c" /><path d="M905.5 317.5 L908.5 318.6 L908.5 314.3 Z" fill="#1b5e9c" /><path d="M926.4 329.2 L928.7 330.8 L931.2 324.3 Z" fill="#1b191b" /><path d="M922.5 326.1 L925.3 327.3 L926.0 321.8 Z" fill="#1b5e9c" /><path d="M923.8 327.0 L925.7 327.9 L926.7 323.4 Z" fill="#1b191b" /><path d="M930.6 332.3 L931.8 334.3 L935.9 330.6 Z" fill="#1b191b" /><path d="M934.0 335.4 L935.0 337.1 L944.3 330.1 Z" fill="#1b191b" /><path d="M942.8 343.9 L944.9 345.4 L948.1 338.6 Z" fill="#1b191b" /><path d="M946.0 346.5 L947.3 347.8 L955.2 338.5 Z" fill="#1b191b" /><path d="M921.8 324.9 L923.1 325.9 L927.3 319.7 Z" fill="#1b5e9c" /><path d="M939.9 341.1 L941.5 342.5 L942.5 339.6 Z" fill="#1b191b" /><path d="M936.8 337.5 L938.5 340.6 L942.0 336.7 Z" fill="#1b191b" /><path d="M965.3 395.9 L967.7 399.0 L972.6 392.9 Z" fill="#1b191b" /><path d="M957.8 373.5 L960.7 375.9 L966.8 365.7 Z" fill="#1b191b" /><path d="M961.0 380.2 L961.6 382.1 L967.7 379.2 Z" fill="#1b191b" /><path d="M957.7 370.1 L958.4 371.9 L961.0 370.0 Z" fill="#1b191b" /><path d="M957.4 369.9 L958.5 371.6 L960.3 369.3 Z" fill="#1b191b" /><path d="M962.5 384.4 L963.2 387.7 L968.1 384.9 Z" fill="#1b191b" /><path d="M952.0 352.5 L953.2 355.1 L957.6 351.4 Z" fill="#1b191b" /><path d="M960.6 380.5 L962.2 382.5 L965.8 378.1 Z" fill="#1b191b" /><path d="M961.1 381.7 L962.7 384.2 L963.7 381.8 Z" fill="#1b191b" /><path d="M958.5 374.1 L960.2 376.0 L964.2 370.5 Z" fill="#1b191b" /><path d="M953.9 359.4 L955.5 361.4 L956.9 358.7 Z" fill="#1b191b" /><path d="M952.4 355.1 L954.4 357.5 L955.1 354.9 Z" fill="#1b191b" /><path d="M967.2 403.1 L967.6 404.6 L972.3 402.7 Z" fill="#1b191b" /><path d="M968.9 427.0 L970.1 430.4 L978.9 425.5 Z" fill="#1b191b" /><path d="M972.2 455.8 L971.8 459.7 L975.1 458.0 Z" fill="#1b191b" /><path d="M969.6 426.3 L969.3 429.7 L979.6 428.7 Z" fill="#1b191b" /><path d="M971.3 453.1 L972.0 454.7 L977.7 451.3 Z" fill="#1b191b" /><path d="M971.1 450.6 L971.8 453.2 L974.2 451.1 Z" fill="#1b191b" /><path d="M971.3 452.2 L971.9 454.3 L976.4 451.8 Z" fill="#1b191b" /><path d="M966.3 399.9 L968.1 402.5 L973.3 396.7 Z" fill="#1b191b" /><path d="M971.0 450.5 L971.9 453.1 L974.0 450.9 Z" fill="#1b191b" /><path d="M969.7 435.2 L970.6 437.9 L982.5 432.7 Z" fill="#1b191b" /><path d="M970.9 449.9 L971.9 452.2 L983.8 445.9 Z" fill="#1b191b" /><path d="M970.6 445.0 L971.3 447.2 L983.4 442.1 Z" fill="#1b191b" /><path d="M970.7 443.4 L971.0 444.9 L977.2 442.8 Z" fill="#1b191b" /><path d="M970.7 446.0 L971.5 448.8 L978.6 445.0 Z" fill="#1b191b" />
<path d="M698.5 318.0 L701.5 318.0 L700.0 296.0 Z" fill="#0e452b" />
<path d="M720.4 309.0 L723.6 309.0 L722.0 285.0 Z" fill="#1b191b" />
<path d="M736.5 303.0 L739.5 303.0 L738.0 277.0 Z" fill="#1b191b" />
<path d="M744.2 300.0 L747.8 300.0 L746.0 280.0 Z" fill="#1b191b" />
<path d="M818.4 291.0 L821.6 291.0 L820.0 269.0 Z" fill="#1b191b" />
<path d="M866.2 300.0 L869.8 300.0 L868.0 286.0 Z" fill="#1b5e9c" />
<path d="M905.8 309.0 L910.2 309.0 L908.0 291.0 Z" fill="#1b5e9c" />
<path d="M918.4 316.0 L921.6 316.0 L920.0 302.0 Z" fill="#1b5e9c" />
<path d="M773.8 295.0 L776.2 295.0 L775.0 279.0 Z" fill="#d8304a" />
<path d="M779.0 294.0 L781.0 294.0 L780.0 282.0 Z" fill="#e86070" />
<path d="M651.0 479.0 L653.0 480.1 L649.8 483.6 Z" fill="#1b191b" />
<path d="M643.9 401.5 L645.9 403.3 L641.7 409.9 Z" fill="#1b191b" />
<path d="M654.4 513.4 L656.4 515.3 L652.6 520.1 Z" fill="#1b191b" />
<path d="M644.3 382.8 L646.3 383.9 L642.2 390.2 Z" fill="#1b191b" />
<path d="M647.6 432.7 L649.6 434.5 L645.0 442.2 Z" fill="#1b191b" />
<path d="M644.6 410.0 L646.6 411.2 L642.2 418.4 Z" fill="#1b191b" />
<path d="M654.5 519.9 L656.5 521.1 L652.9 525.7 Z" fill="#1b191b" />
<path d="M649.0 475.0 L651.0 476.5 L646.0 486.0 Z" fill="#1b191b" />
<path d="M647.1 418.7 L649.1 420.5 L644.4 428.8 Z" fill="#1b191b" />
<path d="M646.3 431.4 L648.3 433.7 L644.0 440.1 Z" fill="#1b191b" />
<path d="M652.1 489.5 L654.1 490.6 L648.7 501.3 Z" fill="#1b191b" />
<path d="M649.2 459.2 L651.2 460.3 L647.4 465.6 Z" fill="#1b191b" />
<path d="M653.3 495.7 L655.3 498.0 L650.8 505.2 Z" fill="#1b191b" />
<path d="M645.1 400.5 L647.1 402.2 L642.4 410.2 Z" fill="#1b191b" />
<path d="M649.3 475.5 L651.3 477.0 L647.6 481.6 Z" fill="#1b191b" />
<path d="M647.5 424.0 L649.5 426.1 L644.1 436.2 Z" fill="#1b191b" />
<path d="M652.6 486.3 L654.6 488.3 L649.3 498.1 Z" fill="#1b191b" />
<path d="M647.4 449.1 L649.4 450.4 L645.1 457.4 Z" fill="#1b191b" />
<path d="M644.6 395.1 L646.6 396.5 L643.3 400.1 Z" fill="#1b191b" />
<path d="M650.9 491.4 L652.9 493.4 L647.7 503.2 Z" fill="#1b191b" />
<path d="M645.5 418.8 L647.5 421.0 L643.3 427.4 Z" fill="#1b191b" />
<path d="M649.5 457.3 L651.5 459.7 L646.7 467.6 Z" fill="#1b191b" />
<path d="M644.0 411.9 L646.0 413.2 L642.7 416.7 Z" fill="#1b191b" />
<path d="M644.6 414.4 L646.6 416.4 L641.1 427.0 Z" fill="#1b191b" />
<path d="M645.3 428.4 L647.3 429.7 L643.3 435.7 Z" fill="#1b191b" />
<path d="M653.0 515.2 L655.0 517.1 L650.1 525.7 Z" fill="#1b191b" />
<path d="M654.3 525.9 L656.3 527.8 L651.1 537.6 Z" fill="#1b191b" />
<path d="M653.0 507.7 L655.0 509.5 L650.0 518.4 Z" fill="#1b191b" />
<path d="M647.1 425.6 L649.1 426.7 L644.4 435.1 Z" fill="#1b191b" />
<path d="M654.5 516.0 L656.5 517.2 L653.2 520.8 Z" fill="#1b191b" />
<path d="M654.1 518.8 L656.1 519.9 L652.6 524.5 Z" fill="#1b191b" />
<path d="M642.4 385.3 L644.4 387.2 L639.7 395.3 Z" fill="#1b191b" />
<path d="M652.6 489.8 L654.6 491.3 L650.0 499.2 Z" fill="#1b191b" />
<path d="M651.4 502.1 L653.4 503.2 L648.0 513.8 Z" fill="#1b191b" />
<path d="M651.7 509.6 L653.7 510.7 L648.2 521.7 Z" fill="#1b191b" />
<path d="M646.1 409.8 L648.1 412.0 L644.9 415.1 Z" fill="#1b191b" />
<path d="M651.8 500.9 L653.8 502.7 L648.7 512.4 Z" fill="#1b191b" />
<path d="M647.1 422.1 L649.1 424.1 L645.7 427.9 Z" fill="#1b191b" />
<path d="M645.5 410.2 L647.5 411.3 L643.3 418.1 Z" fill="#1b191b" />
<path d="M646.2 417.7 L648.2 419.3 L643.3 428.2 Z" fill="#1b191b" />
<path d="M971.0 426.8 L969.0 429.5 L974.3 439.2 Z" fill="#1b191b" />
<path d="M968.2 471.7 L966.2 473.7 L971.2 482.9 Z" fill="#1b191b" />
<path d="M968.4 494.9 L966.4 497.0 L972.3 509.0 Z" fill="#1b191b" />
<path d="M971.1 411.1 L969.1 413.8 L973.1 419.4 Z" fill="#1b191b" />
<path d="M969.5 404.3 L967.5 406.8 L971.9 413.6 Z" fill="#1b191b" />
<path d="M967.1 525.6 L965.1 527.7 L970.3 537.6 Z" fill="#1b191b" />
<path d="M968.0 498.6 L966.0 500.4 L971.3 510.5 Z" fill="#1b191b" />
<path d="M968.0 503.9 L966.0 505.6 L972.7 520.2 Z" fill="#1b191b" />
<path d="M970.8 411.5 L968.8 412.9 L974.0 423.2 Z" fill="#1b191b" />
<path d="M968.3 474.3 L966.3 476.7 L972.4 489.4 Z" fill="#1b191b" />
<path d="M968.9 497.1 L966.9 499.0 L971.8 507.6 Z" fill="#1b191b" />
<path d="M970.6 437.8 L968.6 440.6 L972.7 446.1 Z" fill="#1b191b" />
<path d="M970.3 382.4 L968.3 385.2 L972.9 392.4 Z" fill="#1b191b" />
<path d="M969.3 454.4 L967.3 456.0 L973.7 470.0 Z" fill="#1b191b" />
<path d="M969.7 447.9 L967.7 450.4 L973.7 462.7 Z" fill="#1b191b" />
<path d="M968.8 476.2 L966.8 477.7 L971.5 486.2 Z" fill="#1b191b" />
<path d="M968.8 505.7 L966.8 507.2 L972.8 519.9 Z" fill="#1b191b" />
<path d="M970.2 445.1 L968.2 446.5 L973.8 457.6 Z" fill="#1b191b" />
<path d="M970.4 448.5 L968.4 450.1 L972.9 457.7 Z" fill="#1b191b" />
<path d="M970.5 424.5 L968.5 426.0 L974.8 439.7 Z" fill="#1b191b" />
<path d="M970.0 402.3 L968.0 404.5 L972.8 412.7 Z" fill="#1b191b" />
<path d="M970.2 402.7 L968.2 405.6 L972.5 412.0 Z" fill="#1b191b" />
<path d="M968.0 488.6 L966.0 490.0 L972.7 504.9 Z" fill="#1b191b" />
<path d="M970.8 436.4 L968.8 438.9 L975.0 451.6 Z" fill="#1b191b" />
<path d="M969.1 444.5 L967.1 445.9 L972.8 457.6 Z" fill="#1b191b" />
<path d="M970.2 410.0 L968.2 411.9 L972.1 417.3 Z" fill="#1b191b" />
<path d="M969.0 497.5 L967.0 499.8 L972.3 509.7 Z" fill="#1b191b" />
<path d="M968.9 448.5 L966.9 450.5 L972.5 461.5 Z" fill="#1b191b" />
<path d="M969.6 490.0 L967.6 492.3 L972.7 501.4 Z" fill="#1b191b" />
<path d="M968.6 491.1 L966.6 493.6 L971.1 500.7 Z" fill="#1b191b" />
<path d="M820 268 L821 277" stroke="#1b191b" stroke-width="2.5"/><path d="M636 380 L637 388" stroke="#0e3a2a" stroke-width="2.5"/>
<path d="M714.8 700 L721.2 700 L720.6 798.8 A2.93 2.93 0 0 1 715.4 798.8 Z" fill="#1f9a5c"/>
<path d="M709.8 700 L712.2 700 L712.0 758.8 A1.12 1.12 0 0 1 710.0 758.8 Z" fill="#1f9a5c"/>
<path d="M727.2 740 L730.8 740 L730.4 830.2 A1.57 1.57 0 0 1 727.6 830.2 Z" fill="#0e452b"/>
<path d="M740.0 740 L742.0 740 L741.8 767.0 A0.90 0.90 0 0 1 740.2 767.0 Z" fill="#1b191b"/>
<path d="M761.5 740 L764.5 740 L764.2 778.5 A1.35 1.35 0 0 1 761.8 778.5 Z" fill="#1b191b"/>
<path d="M790.5 750 L793.5 750 L793.2 840.5 A1.35 1.35 0 0 1 790.8 840.5 Z" fill="#f0d232"/>
<path d="M787.0 755 L789.0 755 L788.8 789.0 A0.90 0.90 0 0 1 787.2 789.0 Z" fill="#f0d232"/>
<path d="M804.5 750 L807.5 750 L807.2 798.5 A1.35 1.35 0 0 1 804.8 798.5 Z" fill="#1b191b"/>
<path d="M811.5 755 L814.5 755 L814.2 798.5 A1.35 1.35 0 0 1 811.8 798.5 Z" fill="#b5142e"/>
<path d="M822.0 755 L826.0 755 L825.6 876.0 A1.80 1.80 0 0 1 822.4 876.0 Z" fill="#b5142e"/>
<path d="M831.0 760 L833.0 760 L832.8 804.0 A0.90 0.90 0 0 1 831.2 804.0 Z" fill="#1b191b"/>
<path d="M851.0 755 L853.0 755 L852.8 861.0 A0.90 0.90 0 0 1 851.2 861.0 Z" fill="#1b191b"/>
<path d="M859.8 752 L862.2 752 L862.0 788.8 A1.12 1.12 0 0 1 860.0 788.8 Z" fill="#1b191b"/>
<path d="M869.1 740 L870.9 740 L870.7 805.1 A0.81 0.81 0 0 1 869.3 805.1 Z" fill="#1b191b"/>
<path d="M875.9 740 L878.1 740 L877.9 778.9 A0.99 0.99 0 0 1 876.1 778.9 Z" fill="#1b191b"/>
<path d="M884.8 720 L887.2 720 L887.0 750.8 A1.12 1.12 0 0 1 885.0 750.8 Z" fill="#c81a2e"/>
<path d="M888.2 720 L891.8 720 L891.4 811.2 A1.57 1.57 0 0 1 888.6 811.2 Z" fill="#c81a2e"/>
<path d="M898.8 720 L901.2 720 L901.0 738.8 A1.12 1.12 0 0 1 899.0 738.8 Z" fill="#1b191b"/>
<path d="M904.5 700 L907.5 700 L907.2 743.5 A1.35 1.35 0 0 1 904.8 743.5 Z" fill="#1b191b"/>
<path d="M915.0 690 L917.0 690 L916.8 715.0 A0.90 0.90 0 0 1 915.2 715.0 Z" fill="#1b191b"/>
<path d="M931.8 650 L934.2 650 L934.0 688.8 A1.12 1.12 0 0 1 932.0 688.8 Z" fill="#1b191b"/>
<path d="M703.8 640 L706.2 640 L706.0 698.8 A1.12 1.12 0 0 1 704.0 698.8 Z" fill="#1b191b"/>
<path d="M699.0 662 L701.0 662 L700.8 734.0 A0.90 0.90 0 0 1 699.2 734.0 Z" fill="#1b191b"/>
<circle cx="972.6" cy="634.0" r="1.08" fill="#222"/><circle cx="965.3" cy="579.9" r="0.65" fill="#222"/><circle cx="678.9" cy="709.1" r="0.97" fill="#222"/><circle cx="943.8" cy="573.2" r="0.76" fill="#222"/><circle cx="690.4" cy="716.5" r="0.55" fill="#222"/><circle cx="972.8" cy="565.5" r="0.79" fill="#222"/><circle cx="684.5" cy="678.0" r="1.03" fill="#222"/><circle cx="958.6" cy="502.2" r="0.86" fill="#9a1126"/><circle cx="958.2" cy="620.6" r="1.06" fill="#222"/><circle cx="952.6" cy="688.6" r="0.57" fill="#222"/><circle cx="951.6" cy="647.8" r="0.50" fill="#222"/><circle cx="949.6" cy="492.5" r="0.62" fill="#9a1126"/><circle cx="678.8" cy="691.0" r="0.96" fill="#222"/><circle cx="671.9" cy="681.2" r="0.99" fill="#222"/><circle cx="959.0" cy="528.2" r="1.04" fill="#9a1126"/><circle cx="665.8" cy="708.8" r="1.05" fill="#222"/><circle cx="955.8" cy="603.7" r="0.58" fill="#222"/><circle cx="688.7" cy="710.9" r="1.05" fill="#222"/><circle cx="673.2" cy="697.4" r="0.50" fill="#222"/><circle cx="949.5" cy="667.1" r="0.61" fill="#222"/><circle cx="671.4" cy="691.3" r="0.55" fill="#222"/><circle cx="692.5" cy="684.1" r="0.60" fill="#222"/><circle cx="681.6" cy="691.4" r="0.91" fill="#222"/><circle cx="949.9" cy="684.3" r="1.08" fill="#222"/><circle cx="697.3" cy="715.3" r="1.03" fill="#222"/><circle cx="697.4" cy="701.7" r="0.41" fill="#222"/><circle cx="702.8" cy="702.8" r="0.60" fill="#222"/><circle cx="666.4" cy="681.7" r="1.02" fill="#222"/><circle cx="666.9" cy="715.2" r="1.03" fill="#222"/><circle cx="700.1" cy="700.4" r="1.03" fill="#222"/><circle cx="979.2" cy="653.4" r="1.07" fill="#222"/><circle cx="691.2" cy="696.5" r="0.99" fill="#222"/><circle cx="699.7" cy="697.8" r="0.61" fill="#222"/><circle cx="666.3" cy="694.7" r="0.45" fill="#222"/><circle cx="666.5" cy="694.6" r="0.80" fill="#222"/><circle cx="977.5" cy="481.5" r="1.07" fill="#9a1126"/><circle cx="966.6" cy="664.9" r="0.70" fill="#222"/><circle cx="703.2" cy="673.8" r="0.91" fill="#222"/><circle cx="931.6" cy="614.1" r="0.95" fill="#222"/><circle cx="704.2" cy="695.5" r="0.79" fill="#222"/><circle cx="931.9" cy="638.0" r="0.90" fill="#222"/><circle cx="698.8" cy="688.3" r="0.78" fill="#222"/><circle cx="972.4" cy="526.4" r="0.75" fill="#9a1126"/><circle cx="975.5" cy="544.4" r="1.06" fill="#9a1126"/><circle cx="944.9" cy="591.4" r="1.18" fill="#222"/><circle cx="869" cy="838" r="1.2" fill="#222"/>
</svg>
<!-- transform box -->
<svg style="left:0;top:0" width="1920" height="1080" viewBox="0 0 1920 1080"><rect x="508.5" y="124.5" width="600" height="899" fill="none" stroke="#262626" stroke-width="1" stroke-dasharray="1.2 2.8"/></svg>
<svg style="left:0;top:0" width="1920" height="1080" viewBox="0 0 1920 1080">
 <g fill="#fefefe" stroke="#9c9c9c" stroke-width="1">
  <rect x="505.5" y="121.5" width="6" height="6"/><rect x="805.5" y="121.5" width="6" height="6"/><rect x="1105.5" y="121.5" width="6" height="6"/>
  <rect x="505.5" y="571.5" width="6" height="6"/><rect x="1105.5" y="571.5" width="6" height="6"/>
  <rect x="505.5" y="1021.5" width="6" height="6"/><rect x="805.5" y="1021.5" width="6" height="6"/><rect x="1105.5" y="1021.5" width="6" height="6"/>
 </g>
 <g fill="none" stroke="#2a2a2a" stroke-width="0.8"><rect x="506.5" y="122.5" width="4" height="4"/><rect x="806.5" y="122.5" width="4" height="4"/><rect x="1106.5" y="122.5" width="4" height="4"/><rect x="506.5" y="572.5" width="4" height="4"/><rect x="506.5" y="1022.5" width="4" height="4"/><rect x="806.5" y="1022.5" width="4" height="4"/><rect x="1106.5" y="1022.5" width="4" height="4"/></g>
 <!-- center crosshair -->
 <circle cx="808.5" cy="574.5" r="2.5" fill="none" stroke="#777" stroke-width="0.8"/><path d="M803 574.5 H814 M808.5 569 V580" stroke="#777" stroke-width="0.6"/>
 <!-- cursor -->
 <path d="M1100 576 L1104 572.5 L1104 575 L1111 575 L1111 572.5 L1115 576 L1111 579.5 L1111 577 L1104 577 L1104 579.5 Z" fill="#000" stroke="#fff" stroke-width="0.6"/>
 <rect x="1107" y="573" width="1.2" height="6" fill="#000"/>
</svg>

<!-- STATUS BAR -->
<div class="a" style="left:42px;top:1062px;width:1534px;height:16px;background:#4e4e4e"></div>
<div class="a" style="left:42px;top:1062px;width:49px;height:16px;background:#454545"></div>
<div class="t" style="left:47.5px;top:1064px;font-size:12.5px;color:#ececec">12.5%</div>
<div class="t" style="left:95.5px;top:1064px;font-size:12.6px;color:#d4d4d4;letter-spacing:0.2px">5400 px x 7200 px (300 ppi)</div>
<svg style="left:263px;top:1065px" width="6" height="10" viewBox="0 0 6 10"><path d="M1 1 L5 5 L1 9" fill="none" stroke="#c8c8c8" stroke-width="1.1"/></svg>
<svg style="left:281px;top:1066px" width="6" height="9" viewBox="0 0 6 9"><path d="M5 1 L1.5 4.5 L5 8" fill="none" stroke="#9a9a9a" stroke-width="1"/></svg>
<div class="a" style="left:289px;top:1062px;width:1287px;height:16px;background:#505050"></div>
<div class="a" style="left:650px;top:1064px;width:549px;height:12px;background:#6a6a6a;border-radius:2px"></div>
<svg style="left:1563px;top:1066px" width="6" height="9" viewBox="0 0 6 9"><path d="M1 1 L4.5 4.5 L1 8" fill="none" stroke="#9a9a9a" stroke-width="1"/></svg>
<div class="a" style="left:1576px;top:1062px;width:16px;height:16px;background:#4e4e4e"></div>


<div class="a" style="left:0;top:1078px;width:1920px;height:2px;background:#3a3a3a"></div>

<!-- V SCROLLBAR -->
<div class="a" style="left:1576px;top:86px;width:16px;height:976px;background:#4a4a4a"></div>
<div class="a" style="left:1578px;top:400px;width:12px;height:347px;background:#6a6a6a;border-radius:2px"></div>
<div class="a" style="left:1592px;top:64px;width:3px;height:1016px;background:#383838"></div>

<svg style="left:1580px;top:1049px" width="9" height="6" viewBox="0 0 9 6"><path d="M1 1 L4.5 4.5 L8 1" fill="none" stroke="#9a9a9a" stroke-width="1"/></svg><svg style="left:1580px;top:94px" width="9" height="6" viewBox="0 0 9 6"><path d="M1 5 L4.5 1.5 L8 5" fill="none" stroke="#7a7a7a" stroke-width="1"/></svg>
<!-- DOCK COLUMN -->
<div class="a" style="left:1595px;top:64px;width:37px;height:1016px;background:#535353"></div>
<div class="a" style="left:1632px;top:64px;width:3px;height:1016px;background:#3a3a3a"></div>

<!-- RIGHT PANEL -->
<div class="a" style="left:1635px;top:64px;width:285px;height:1016px;background:#535353"></div>


<!-- RIGHT DOCK HEADER -->
<div class="a" style="left:1595px;top:64px;width:325px;height:13px;background:#3e3e3e"></div>
<svg style="left:1618px;top:67px" width="9" height="7" viewBox="0 0 9 7" fill="none" stroke="#e0e0e0" stroke-width="1.2"><path d="M4 0.5 L1 3.5 L4 6.5 M8 0.5 L5 3.5 L8 6.5"/></svg>
<svg style="left:1903px;top:67px" width="9" height="7" viewBox="0 0 9 7" fill="none" stroke="#e0e0e0" stroke-width="1.2"><path d="M1 0.5 L4 3.5 L1 6.5 M5 0.5 L8 3.5 L5 6.5"/></svg>
<!-- dock groups -->
<div class="a" style="left:1595px;top:77px;width:37px;height:96px;border-bottom:2px solid #3a3a3a"></div>
<div class="a" style="left:1595px;top:173px;width:37px;height:69px;border-bottom:2px solid #3a3a3a"></div>
<div class="a" style="left:1595px;top:242px;width:37px;height:68px;border-bottom:2px solid #3a3a3a"></div>
<div class="a" style="left:1595px;top:310px;width:37px;height:43px;border-bottom:2px solid #3a3a3a"></div>
<svg style="left:1603px;top:80px" width="20" height="5" viewBox="0 0 20 5" stroke="#6c6c6c" stroke-width="0.7"><line x1="0.5" y1="0" x2="0.5" y2="4"/><line x1="2.7" y1="0" x2="2.7" y2="4"/><line x1="4.9" y1="0" x2="4.9" y2="4"/><line x1="7.1" y1="0" x2="7.1" y2="4"/><line x1="9.3" y1="0" x2="9.3" y2="4"/><line x1="11.5" y1="0" x2="11.5" y2="4"/><line x1="13.7" y1="0" x2="13.7" y2="4"/><line x1="15.9" y1="0" x2="15.9" y2="4"/><line x1="18.1" y1="0" x2="18.1" y2="4"/></svg><svg style="left:1603px;top:177px" width="20" height="5" viewBox="0 0 20 5" stroke="#6c6c6c" stroke-width="0.7"><line x1="0.5" y1="0" x2="0.5" y2="4"/><line x1="2.7" y1="0" x2="2.7" y2="4"/><line x1="4.9" y1="0" x2="4.9" y2="4"/><line x1="7.1" y1="0" x2="7.1" y2="4"/><line x1="9.3" y1="0" x2="9.3" y2="4"/><line x1="11.5" y1="0" x2="11.5" y2="4"/><line x1="13.7" y1="0" x2="13.7" y2="4"/><line x1="15.9" y1="0" x2="15.9" y2="4"/><line x1="18.1" y1="0" x2="18.1" y2="4"/></svg><svg style="left:1603px;top:246px" width="20" height="5" viewBox="0 0 20 5" stroke="#6c6c6c" stroke-width="0.7"><line x1="0.5" y1="0" x2="0.5" y2="4"/><line x1="2.7" y1="0" x2="2.7" y2="4"/><line x1="4.9" y1="0" x2="4.9" y2="4"/><line x1="7.1" y1="0" x2="7.1" y2="4"/><line x1="9.3" y1="0" x2="9.3" y2="4"/><line x1="11.5" y1="0" x2="11.5" y2="4"/><line x1="13.7" y1="0" x2="13.7" y2="4"/><line x1="15.9" y1="0" x2="15.9" y2="4"/><line x1="18.1" y1="0" x2="18.1" y2="4"/></svg><svg style="left:1603px;top:314px" width="20" height="5" viewBox="0 0 20 5" stroke="#6c6c6c" stroke-width="0.7"><line x1="0.5" y1="0" x2="0.5" y2="4"/><line x1="2.7" y1="0" x2="2.7" y2="4"/><line x1="4.9" y1="0" x2="4.9" y2="4"/><line x1="7.1" y1="0" x2="7.1" y2="4"/><line x1="9.3" y1="0" x2="9.3" y2="4"/><line x1="11.5" y1="0" x2="11.5" y2="4"/><line x1="13.7" y1="0" x2="13.7" y2="4"/><line x1="15.9" y1="0" x2="15.9" y2="4"/><line x1="18.1" y1="0" x2="18.1" y2="4"/></svg>
<svg style="left:1595px;top:77px" width="37" height="280" viewBox="1595 77 37 280">
 <!-- history -->
 <g fill="none" stroke="#e0e0e0" stroke-width="1"><rect x="1602.5" y="92" width="4" height="4"/><rect x="1602.5" y="97.5" width="4" height="4"/></g><rect x="1602" y="103" width="5" height="5" fill="#e0e0e0"/>
 <path d="M1611 95 C1616 93.5, 1618 98, 1616 102 C1615 104, 1613.5 106, 1612 107.5" fill="none" stroke="#e0e0e0" stroke-width="1.6"/><path d="M1609.5 92 L1613.5 93 L1611 97Z" fill="#e0e0e0"/>
 <!-- play -->
 <path d="M1606 121 L1620 127.7 L1606 134.4Z" fill="#e0e0e0"/>
 <!-- comment -->
 <path d="M1604 148 H1620 V158 H1610 L1607 161.5 L1607 158 H1604Z" fill="#e0e0e0"/>
 <!-- brush settings -->
 <g fill="#e0e0e0"><rect x="1602" y="189.5" width="1.5" height="1.5"/><rect x="1602" y="192.5" width="1.5" height="1.5"/><rect x="1602" y="195.5" width="1.5" height="1.5"/><rect x="1604.5" y="189.5" width="4" height="1.3"/><rect x="1604.5" y="192.5" width="4" height="1.3"/><rect x="1604.5" y="195.5" width="3" height="1.3"/></g>
 <path d="M1612 197 L1622 189.5" stroke="#e0e0e0" stroke-width="2.2" stroke-linecap="round"/><path d="M1605.5 204.5 C1606 201, 1608 198, 1611 198.5 C1613 199.5, 1612.5 202, 1610 203.5 C1608.5 204.3, 1607 204.5, 1605.5 204.5Z" fill="#e0e0e0"/>
 <!-- brushes -->
 <path d="M1603 219.5 H1622 M1603 228.5 H1614" stroke="#e0e0e0" stroke-width="1.5"/><ellipse cx="1608" cy="219.5" rx="4" ry="3" fill="#e0e0e0"/><path d="M1622 223 C1618 224, 1615 226, 1615 229 C1615 232, 1619 233, 1622 232Z" fill="#e0e0e0"/>
 <!-- character -->
 <text x="1601.5" y="272.5" font-family="Liberation Sans" font-size="16" fill="#e0e0e0">A</text><rect x="1617.5" y="257.5" width="1.2" height="16" fill="#e0e0e0"/>
 <!-- paragraph -->
 <path d="M1612.5 287 H1620 V301 H1618.3 V288.5 H1616.5 V301 H1614.8 V295 C1610 295, 1607.5 293, 1607.5 291 C1607.5 288.5, 1609.5 287, 1612.5 287Z" fill="#e0e0e0"/>
 <!-- sliders -->
 <path d="M1602 328.5 H1622 M1602 334 H1622 M1602 339.5 H1622" stroke="#e0e0e0" stroke-width="1.1"/>
 <g fill="#535353" stroke="#e0e0e0" stroke-width="1.1"><circle cx="1609.5" cy="328.5" r="2.2"/><circle cx="1616" cy="334" r="2.2"/><circle cx="1610.5" cy="339.5" r="2.2"/></g>
</svg>

<!-- ADJUSTMENTS PANEL -->
<div class="a" style="left:1635px;top:77px;width:285px;height:18px;background:#424242"></div>
<div class="a" style="left:1764px;top:77px;width:83px;height:18px;background:#535353"></div>
<div class="a" style="left:1670px;top:79px;width:1px;height:15px;background:#3a3a3a"></div>
<div class="a" style="left:1702.5px;top:79px;width:1px;height:15px;background:#3a3a3a"></div>
<div class="a" style="left:1735px;top:79px;width:1px;height:15px;background:#3a3a3a"></div>
<div class="a" style="left:1882px;top:79px;width:1px;height:15px;background:#3a3a3a"></div>
<div class="a" style="left:1641.8px;top:79.7px;width:26px;height:14px;overflow:hidden"><div class="t" style="left:0;top:0;font-size:11.6px;font-weight:bold;color:#a9a9a9">Color</div></div>
<div class="a" style="left:1673.8px;top:79.7px;width:26px;height:14px;overflow:hidden"><div class="t" style="left:0;top:0;font-size:11.6px;font-weight:bold;color:#a9a9a9">Swatches</div></div>
<div class="a" style="left:1705.8px;top:79.7px;width:25.5px;height:14px;overflow:hidden"><div class="t" style="left:0;top:0;font-size:11.6px;font-weight:bold;color:#a9a9a9">Gradients</div></div>
<div class="a" style="left:1738.8px;top:79.7px;width:25px;height:14px;overflow:hidden"><div class="t" style="left:0;top:0;font-size:11.6px;font-weight:bold;color:#a9a9a9">Patterns</div></div>
<div class="t" style="left:1770px;top:79.7px;font-size:11.6px;font-weight:bold;color:#f2f2f2">Adjustments</div>
<div class="a" style="left:1854.3px;top:79.7px;width:28px;height:14px;overflow:hidden"><div class="t" style="left:0;top:0;font-size:11.6px;font-weight:bold;color:#a9a9a9">Libraries</div></div>
<svg style="left:1904px;top:82px" width="11" height="8" viewBox="0 0 11 8" fill="#d0d0d0"><rect y="0" width="11" height="1"/><rect y="2" width="11" height="1"/><rect y="4" width="11" height="1"/><rect y="6" width="11" height="1"/></svg>
<div class="t" style="left:1645px;top:104.5px;font-size:12.7px;color:#e0e0e0">Add an adjustment</div>
<svg style="left:1670px;top:125px" width="145" height="78" viewBox="1670 125 145 78">
 <defs><linearGradient id="gm" x1="0" x2="1"><stop offset="0" stop-color="#111"/><stop offset="1" stop-color="#f0f0f0"/></linearGradient>
 <linearGradient id="gv" x1="0" x2="0" y1="0" y2="1"><stop offset="0" stop-color="#f0f0f0"/><stop offset="1" stop-color="#222"/></linearGradient>
 <radialGradient id="vib"><stop offset="0" stop-color="#444"/><stop offset="1" stop-color="#ddd"/></radialGradient></defs>
 <!-- row1 -->
 <circle cx="1693.5" cy="137.5" r="4.8" fill="none" stroke="#e0e0e0" stroke-width="1.3"/><path d="M1693.5 132.7 A4.8 4.8 0 0 1 1693.5 142.3Z" fill="#e0e0e0"/>
 <g stroke="#e0e0e0" stroke-width="1.1"><line x1="1693.5" y1="129" x2="1693.5" y2="131"/><line x1="1693.5" y1="144" x2="1693.5" y2="146"/><line x1="1685" y1="137.5" x2="1687" y2="137.5"/><line x1="1700" y1="137.5" x2="1702" y2="137.5"/><line x1="1687.5" y1="131.5" x2="1688.8" y2="132.8"/><line x1="1698.2" y1="142.2" x2="1699.5" y2="143.5"/><line x1="1699.5" y1="131.5" x2="1698.2" y2="132.8"/><line x1="1688.8" y1="142.2" x2="1687.5" y2="143.5"/></g>
 <path d="M1708.5 146 L1708.5 139 L1710 136 L1711 139 L1712.5 134 L1714 139 L1715.5 132 L1717 138 L1718.5 131 L1720 137 L1721.5 134 L1723 139 L1724.5 135 L1726 140 L1727.5 138 L1727.5 146Z" fill="#e0e0e0"/>
 <rect x="1734.5" y="130" width="15.5" height="15.5" fill="none" stroke="#bdbdbd" stroke-width="1"/><path d="M1734.5 135.2 H1750 M1734.5 140.3 H1750 M1739.7 130 V145.5 M1744.8 130 V145.5" stroke="#9a9a9a" stroke-width="0.8"/><path d="M1735 145 C1740 143, 1744 137, 1749.5 130.5" stroke="#e0e0e0" stroke-width="1.2" fill="none"/>
 <rect x="1758" y="130.5" width="16" height="15.5" fill="#e0e0e0"/><path d="M1758 146 L1774 130.5 L1774 146Z" fill="#6a6a6a"/><path d="M1760 134.5 h4 M1762 132.5 v4 M1766 141.5 h5" stroke="#333" stroke-width="1.1"/><path d="M1758 146 L1774 130.5 L1774 146Z" fill="none" stroke="#e0e0e0" stroke-width="1"/>
 <path d="M1782.5 131 L1797 131 L1789.7 146Z" fill="url(#vib)" stroke="#e0e0e0" stroke-width="1.2"/>
 <!-- row2 -->
 <rect x="1674" y="157" width="16" height="13" fill="url(#gv)" stroke="#e0e0e0" stroke-width="1"/><path d="M1674 161.5 H1690" stroke="#e0e0e0" stroke-width="0.6"/><g fill="#333"><rect x="1676" y="158" width="1.3" height="3"/><rect x="1679" y="158" width="1.3" height="3"/><rect x="1682" y="158" width="1.3" height="3"/><rect x="1685" y="158" width="1.3" height="3"/></g>
 <path d="M1699 160 H1713 M1706 157 V167" stroke="#e0e0e0" stroke-width="1.1"/><circle cx="1706" cy="158.3" r="1.3" fill="#535353" stroke="#e0e0e0" stroke-width="1"/><path d="M1699 160 L1696.5 167 M1699 160 L1701.5 167 M1713 160 L1710.5 167 M1713 160 L1715.5 167" stroke="#e0e0e0" stroke-width="0.8"/><path d="M1696 167 A3 2.8 0 0 0 1702 167Z M1710 167 A3 2.8 0 0 0 1716 167Z" fill="#e0e0e0"/>
 <rect x="1722" y="157.5" width="16" height="13" fill="#e0e0e0"/><rect x="1723" y="158.5" width="7" height="11" fill="#535353"/>
 <path d="M1745 161 H1748 L1749.5 159 H1754 L1755.5 161 H1758 V169 H1745Z" fill="#e0e0e0"/><circle cx="1751.5" cy="165" r="2.5" fill="#535353"/><circle cx="1757.5" cy="170" r="3.3" fill="#535353" stroke="#e0e0e0" stroke-width="1.1"/>
 <circle cx="1777.5" cy="161.5" r="4.3" fill="#9a9a9a"/><circle cx="1773.5" cy="168" r="4.3" fill="#d5d5d5" opacity=".9"/><circle cx="1781.5" cy="168" r="4.3" fill="#bcbcbc" opacity=".9"/><circle cx="1777.5" cy="166" r="2" fill="#555"/>
 <rect x="1794.5" y="157.5" width="15.5" height="12.5" fill="#e0e0e0"/><g fill="#3c3c3c"><rect x="1796" y="159" width="3.6" height="2.5"/><rect x="1800.8" y="159" width="3.6" height="2.5"/><rect x="1805.6" y="159" width="3.2" height="2.5"/><rect x="1796" y="162.7" width="3.6" height="2.5"/><rect x="1800.8" y="162.7" width="3.6" height="2.5"/><rect x="1805.6" y="162.7" width="3.2" height="2.5"/><rect x="1796" y="166.3" width="3.6" height="2.5"/><rect x="1800.8" y="166.3" width="3.6" height="2.5"/><rect x="1805.6" y="166.3" width="3.2" height="2.5"/></g>
 <!-- row3 -->
 <rect x="1686" y="185" width="16" height="13" fill="#e0e0e0"/><rect x="1687.2" y="186.2" width="13.6" height="10.6" fill="#4a4a4a"/><ellipse cx="1694" cy="191.5" rx="3.5" ry="5" fill="#e0e0e0" transform="rotate(30 1694 191.5)"/><path d="M1688 196 L1700 187" stroke="#4a4a4a" stroke-width="1.2"/>
 <rect x="1709.8" y="185" width="16" height="13" fill="#888" stroke="#e0e0e0" stroke-width="1"/><path d="M1710 192 L1717 185 M1713 197 L1725 186 M1719 198 L1726 191" stroke="#d8d8d8" stroke-width="2"/>
 <rect x="1734" y="185" width="16" height="13" fill="#e0e0e0"/><path d="M1735 196 L1739 196 L1739 193 L1743 193 L1743 190 L1746 190 L1746 187 L1749 187 L1749 190.5 L1747 190.5 L1747 193.5 L1744 193.5 L1744 196.5 L1740 196.5 L1740 197 L1735 197Z" fill="#333"/>
 <rect x="1758" y="185" width="16" height="13" fill="#e0e0e0"/><path d="M1759 186 L1766 191.5 L1773 186 Z" fill="#9a9a9a"/><path d="M1759 197 L1766 191.5 L1773 197Z" fill="#777"/>
 <rect x="1782" y="185" width="16" height="13" fill="url(#gm)" stroke="#e0e0e0" stroke-width="1"/>
</svg>

<!-- LAYERS PANEL -->
<div class="a" style="left:1635px;top:384px;width:285px;height:3px;background:#383838"></div>
<div class="a" style="left:1635px;top:387px;width:285px;height:18px;background:#424242"></div>
<div class="a" style="left:1635px;top:387px;width:49px;height:18px;background:#535353"></div>
<div class="a" style="left:1748.6px;top:389px;width:1px;height:15px;background:#3a3a3a"></div>
<div class="a" style="left:1794px;top:389px;width:1px;height:15px;background:#3a3a3a"></div>
<div class="t" style="left:1642.4px;top:390px;font-size:11.2px;font-weight:bold;color:#f2f2f2">Layers</div>
<div class="t" style="left:1690.7px;top:390px;font-size:11.3px;font-weight:bold;color:#a9a9a9">Channels</div>
<div class="t" style="left:1756px;top:390px;font-size:11.3px;font-weight:bold;color:#a9a9a9">Paths</div>
<svg style="left:1904px;top:392px" width="11" height="8" viewBox="0 0 11 8" fill="#d0d0d0"><rect y="0" width="11" height="1"/><rect y="2" width="11" height="1"/><rect y="4" width="11" height="1"/><rect y="6" width="11" height="1"/></svg>
<!-- kind row -->
<div class="a" style="left:1639.4px;top:413.8px;width:98px;height:21.5px;background:#454545;border:1px solid #3d3d3d;border-radius:2px"></div>
<svg style="left:1647px;top:419px" width="11" height="11" viewBox="0 0 11 11" fill="none" stroke="#e0e0e0" stroke-width="1.4"><circle cx="4.5" cy="4.5" r="3.3"/><line x1="7" y1="7" x2="10" y2="10" stroke-width="1.8"/></svg>
<div class="t" style="left:1661.7px;top:418px;font-size:12px;color:#e0e0e0">Kind</div>
<svg style="left:1726.5px;top:422px" width="9" height="6" viewBox="0 0 9 6"><path d="M1 1 L4.5 4.5 L8 1" stroke="#bdbdbd" stroke-width="1.1" fill="none"/></svg>
<svg style="left:1750px;top:413px" width="140" height="22" viewBox="1750 413 140 22">
 <rect x="1752.2" y="419.5" width="11.5" height="10" fill="none" stroke="#e0e0e0" stroke-width="1.1"/><path d="M1753.5 428.5 L1756.5 424 L1758.5 426.5 L1760 425 L1762.5 428.5Z" fill="#e0e0e0"/>
 <circle cx="1782.4" cy="424.6" r="5.3" fill="none" stroke="#e0e0e0" stroke-width="1.1"/><path d="M1786.2 420.8 A5.3 5.3 0 0 1 1778.6 428.4Z" fill="#e0e0e0"/>
 <path d="M1801.5 419 H1812 V422 H1811 L1810.3 420.7 H1808 V428.8 H1809.5 V430.3 H1804 V428.8 H1805.5 V420.7 H1803.2 L1802.5 422 H1801.5Z" fill="#e0e0e0"/>
 <rect x="1826.5" y="420.5" width="8.5" height="8.5" fill="none" stroke="#e0e0e0" stroke-width="1"/><g fill="#e0e0e0"><rect x="1825" y="419" width="3" height="3"/><rect x="1833.5" y="419" width="3" height="3"/><rect x="1825" y="427.5" width="3" height="3"/><rect x="1833.5" y="427.5" width="3" height="3"/></g>
 <path d="M1853 419 H1858 L1860.4 421.4 V430 H1855" fill="none" stroke="#e0e0e0" stroke-width="1.1"/><rect x="1849.8" y="425" width="6" height="5.5" fill="#e0e0e0"/><path d="M1853 419 V425" stroke="#e0e0e0" stroke-width="1"/>
 <rect x="1875" y="416" width="9.5" height="16" rx="4.75" fill="#3c3c3c"/><circle cx="1879.7" cy="420.7" r="4.3" fill="#e8e8e8"/>
</svg>
<div class="a" style="left:1635px;top:438px;width:270px;height:1px;background:#474747"></div>
<!-- normal row -->
<div class="a" style="left:1639.4px;top:443.7px;width:125.5px;height:21.5px;background:#454545;border:1px solid #3d3d3d;border-radius:2px"></div>
<div class="t" style="left:1648px;top:448px;font-size:12px;color:#e6e6e6">Normal</div>
<svg style="left:1753.5px;top:452px" width="9" height="6" viewBox="0 0 9 6"><path d="M1 1 L4.5 4.5 L8 1" stroke="#bdbdbd" stroke-width="1.1" fill="none"/></svg>
<div class="t" style="left:1771.2px;top:448px;font-size:12px;color:#d6d6d6">Opacity:</div>
<div class="a" style="left:1821.8px;top:444.5px;width:61.2px;height:20px;background:#454545;border:1px solid #3d3d3d;border-radius:2px"></div>
<div class="a" style="left:1868px;top:445px;width:1px;height:19px;background:#3d3d3d"></div>
<div class="t" style="left:1827px;top:448px;font-size:12px;color:#e6e6e6">100%</div>
<svg style="left:1871.5px;top:452px" width="9" height="6" viewBox="0 0 9 6"><path d="M1 1 L4.5 4.5 L8 1" stroke="#bdbdbd" stroke-width="1.1" fill="none"/></svg>
<div class="a" style="left:1635px;top:468px;width:270px;height:1px;background:#474747"></div>
<!-- lock row -->
<div class="t" style="left:1642px;top:478px;font-size:12px;color:#cfcfcf">Lock:</div>
<svg style="left:1676px;top:474px" width="106" height="18" viewBox="1676 474 106 18">
 <rect x="1678.6" y="477.5" width="11" height="11" fill="#8a8a8a"/><g fill="#5a5a5a"><rect x="1678.6" y="477.5" width="3.7" height="3.7"/><rect x="1685.9" y="477.5" width="3.7" height="3.7"/><rect x="1682.3" y="481.2" width="3.7" height="3.7"/><rect x="1678.6" y="484.8" width="3.7" height="3.7"/><rect x="1685.9" y="484.8" width="3.7" height="3.7"/></g>
 <path d="M1705 484.5 L1713 476.5" stroke="#8e8e8e" stroke-width="2" stroke-linecap="round"/><path d="M1700 490.5 C1700.5 487.5, 1702 485, 1704.5 485.5 C1706 486.3, 1705.5 488.3, 1703.5 489.5 C1702.5 490, 1701 490.5, 1700 490.5Z" fill="#8e8e8e"/>
 <g fill="#e0e0e0" stroke="#e0e0e0"><line x1="1728.4" y1="477" x2="1728.4" y2="490" stroke-width="1.4"/><line x1="1722" y1="483.5" x2="1735" y2="483.5" stroke-width="1.4"/><path d="M1728.4 475.7 L1730.8 478.5 L1726 478.5Z M1728.4 491.3 L1730.8 488.5 L1726 488.5Z M1720.7 483.5 L1723.5 481.1 L1723.5 485.9Z M1736.1 483.5 L1733.3 481.1 L1733.3 485.9Z" stroke="none"/></g>
 <path d="M1746.5 479 V488.5 H1756 M1744 481.5 H1753.5 L1756 479" fill="none" stroke="#e0e0e0" stroke-width="1.1"/><path d="M1746.5 488.5 V491 M1756 488.5 V491 M1744 488.5 H1746.5 M1756 488.5 H1758.5" stroke="#e0e0e0" stroke-width="0.9"/>
 <path d="M1770 483 V480.5 C1770 477.8, 1776 477.8, 1776 480.5 V483" fill="none" stroke="#e0e0e0" stroke-width="1.6"/><rect x="1768" y="483" width="10.3" height="7.5" fill="#e0e0e0"/><rect x="1772.4" y="485.5" width="1.5" height="2.5" fill="#535353"/>
</svg>
<div class="t" style="left:1797px;top:478px;font-size:12px;color:#cfcfcf">Fill:</div>
<div class="a" style="left:1821.8px;top:473.5px;width:61.2px;height:19px;background:#454545;border:1px solid #3d3d3d;border-radius:2px"></div>
<div class="a" style="left:1868px;top:474px;width:1px;height:18px;background:#3d3d3d"></div>
<div class="t" style="left:1827px;top:478px;font-size:12px;color:#e6e6e6">100%</div>
<svg style="left:1871.5px;top:481px" width="9" height="6" viewBox="0 0 9 6"><path d="M1 1 L4.5 4.5 L8 1" stroke="#bdbdbd" stroke-width="1.1" fill="none"/></svg>
<div class="a" style="left:1635px;top:496px;width:270px;height:1px;background:#474747"></div>
<!-- layer rows -->
<div class="a" style="left:1635px;top:497px;width:283px;height:556px;background:#4d4d4d"></div>
<div class="a" style="left:1635px;top:501px;width:283px;height:123px;background:#535353"></div>
<div class="a" style="left:1918px;top:64px;width:2px;height:1016px;background:#3c3c3c"></div>
<div class="a" style="left:1635px;top:501px;width:268px;height:1px;background:#4a4a4a"></div>
<div class="a" style="left:1665px;top:501px;width:238.5px;height:39.5px;background:#506780"></div>
<div class="a" style="left:1635px;top:540.5px;width:268px;height:1.3px;background:#464646"></div>
<div class="a" style="left:1665px;top:541px;width:238.5px;height:1px;background:#5f7590"></div>
<div class="a" style="left:1635px;top:581.5px;width:268px;height:1.3px;background:#464646"></div>
<div class="a" style="left:1635px;top:623px;width:268px;height:1.3px;background:#464646"></div>
<div class="a" style="left:1664px;top:501px;width:1px;height:123px;background:#4a4a4a"></div>
<svg style="left:1640px;top:500px" width="22" height="120" viewBox="1640 500 22 120">
 <g fill="#e0e0e0"><path d="M1643.9 522.2 C1646 518.5, 1648.5 517.3, 1650.4 517.3 C1652.3 517.3, 1654.8 518.5, 1656.9 522.2 C1654.8 525.9, 1652.3 527.1, 1650.4 527.1 C1648.5 527.1, 1646 525.9, 1643.9 522.2Z"/>
 <path d="M1643.9 563.4 C1646 559.7, 1648.5 558.5, 1650.4 558.5 C1652.3 558.5, 1654.8 559.7, 1656.9 563.4 C1654.8 567.1, 1652.3 568.3, 1650.4 568.3 C1648.5 568.3, 1646 567.1, 1643.9 563.4Z"/>
 <path d="M1643.9 604 C1646 600.3, 1648.5 599.1, 1650.4 599.1 C1652.3 599.1, 1654.8 600.3, 1656.9 604 C1654.8 607.7, 1652.3 608.9, 1650.4 608.9 C1648.5 608.9, 1646 607.7, 1643.9 604Z"/></g>
 <g fill="#535353"><circle cx="1650.4" cy="522.2" r="2.6"/><circle cx="1650.4" cy="563.4" r="2.6"/><circle cx="1650.4" cy="604" r="2.6"/></g>
 <g fill="#e0e0e0"><circle cx="1650.4" cy="522.2" r="1.4"/><circle cx="1650.4" cy="563.4" r="1.4"/><circle cx="1650.4" cy="604" r="1.4"/></g>
</svg>
<svg style="left:1665px;top:500px" width="35" height="125" viewBox="1665 500 35 125">
 <defs><linearGradient id="tq" x1="0" x2="0" y1="0" y2="1"><stop offset="0" stop-color="#7ed6cd"/><stop offset="1" stop-color="#1fdccb"/></linearGradient></defs>
 <!-- design thumb -->
 <rect x="1669.6" y="505.6" width="23.8" height="32.4" fill="#ffffff" stroke="#2a3240" stroke-width="1"/>
 <path d="M1676 519 C1676 514, 1679 512, 1681.5 512 C1684 512, 1687 514, 1687 519 L1686 524 L1677 524Z" fill="#1e1e22"/>
 <rect x="1678.2" y="514.5" width="1.6" height="8" fill="#2c7a45"/><rect x="1679.8" y="514" width="1.5" height="8.5" fill="#c9a43a"/><rect x="1681.3" y="513" width="1.8" height="9.5" fill="#a8223a"/><rect x="1683.1" y="514" width="1.6" height="8.5" fill="#2a4f80"/>
 <path d="M1667.5 513 V503.6 H1677 M1686.5 503.6 H1695.9 V513 M1667.5 529 V538.6 H1677 M1686.5 538.6 H1695.9 V529" fill="none" stroke="#f4f4f4" stroke-width="1.3"/>
 <rect x="1678.2" y="522.3" width="15.2" height="15.4" fill="#444b57" stroke="#2a2f38" stroke-width="0.8"/>
 <path d="M1683.8 525.5 H1687.2 V528.5 H1690 V535 H1686.5 V533 H1688.3 V530 H1685.5 V527 H1683.8Z" fill="#e2e2e2"/><rect x="1680.7" y="531" width="4.6" height="4.2" fill="#e2e2e2"/>
 <!-- 18x24 thumb -->
 <rect x="1669.6" y="546.8" width="23.8" height="31.6" fill="url(#tq)" stroke="#2c2c2c" stroke-width="0.8"/>
 <text x="1676.8" y="560.5" font-family="Liberation Sans" font-weight="bold" font-size="5.2" fill="#e8f8f6">3:4</text>
 <rect x="1673" y="567" width="4" height="0.8" fill="#e8f8f6"/>
 <rect x="1678.5" y="563.5" width="15" height="15" fill="#464646" stroke="#2a2a2a" stroke-width="0.8"/>
 <path d="M1683.8 566.5 H1687.2 V569.5 H1690 V576 H1686.5 V574 H1688.3 V571 H1685.5 V568 H1683.8Z" fill="#e2e2e2"/><rect x="1680.7" y="572" width="4.6" height="4.2" fill="#e2e2e2"/>
 <!-- bg thumb -->
 <rect x="1669.6" y="588" width="23.8" height="31.2" fill="#ffffff" stroke="#2c2c2c" stroke-width="0.8"/>
</svg>
<div class="t" style="left:1704px;top:515.5px;font-size:12px;color:#e4e8ee">Design</div>
<div class="t" style="left:1704px;top:556.5px;font-size:12px;color:#e6e6e6">18x24</div>
<div class="t" style="left:1704px;top:597.5px;font-size:12px;color:#e6e6e6">Background</div>
<!-- footer -->
<div class="a" style="left:1635px;top:1052.5px;width:283px;height:1.2px;background:#3f3f3f"></div>
<svg style="left:1710px;top:1055px" width="190" height="22" viewBox="1710 1055 190 22">
 <g fill="none" stroke="#a0a0a0" stroke-width="1.3"><rect x="1717.5" y="1062" width="7" height="6.5" rx="3.25"/><rect x="1723.5" y="1062" width="7" height="6.5" rx="3.25"/><line x1="1721" y1="1065.2" x2="1727" y2="1065.2"/></g>
 <text x="1745" y="1071" font-family="Liberation Serif" font-style="italic" font-size="15" fill="#e0e0e0">fx</text><path d="M1755 1072 L1759 1072 L1757 1074Z" fill="#e0e0e0"/>
 <rect x="1770.8" y="1059.5" width="13.2" height="10.5" fill="#e0e0e0"/><circle cx="1777.4" cy="1064.7" r="2.8" fill="#333"/>
 <circle cx="1805.4" cy="1065.3" r="5.5" fill="none" stroke="#e0e0e0" stroke-width="1.1"/><path d="M1809.3 1061.4 A5.5 5.5 0 0 1 1801.5 1069.2Z" fill="#e0e0e0"/><path d="M1809 1072 L1813 1072 L1811 1074Z" fill="#e0e0e0"/>
 <path d="M1825.6 1060.5 H1831 V1061.8 H1838.2 V1070 H1825.6Z" fill="#e0e0e0"/>
 <rect x="1854" y="1059.5" width="11" height="11" fill="none" stroke="#e0e0e0" stroke-width="1.1"/><path d="M1859.5 1062 V1068 M1856.5 1065 H1862.5" stroke="#e0e0e0" stroke-width="1.2"/>
 <path d="M1880.5 1061 H1891 M1883.5 1061 V1059.3 H1888 V1061" fill="none" stroke="#e0e0e0" stroke-width="1.1"/><path d="M1881.5 1062.5 H1890 L1889.3 1071.5 H1882.2Z" fill="none" stroke="#e0e0e0" stroke-width="1.1"/><path d="M1884 1064 V1070 M1885.8 1064 V1070 M1887.5 1064 V1070" stroke="#e0e0e0" stroke-width="0.8"/>
</svg>

</body></html>
